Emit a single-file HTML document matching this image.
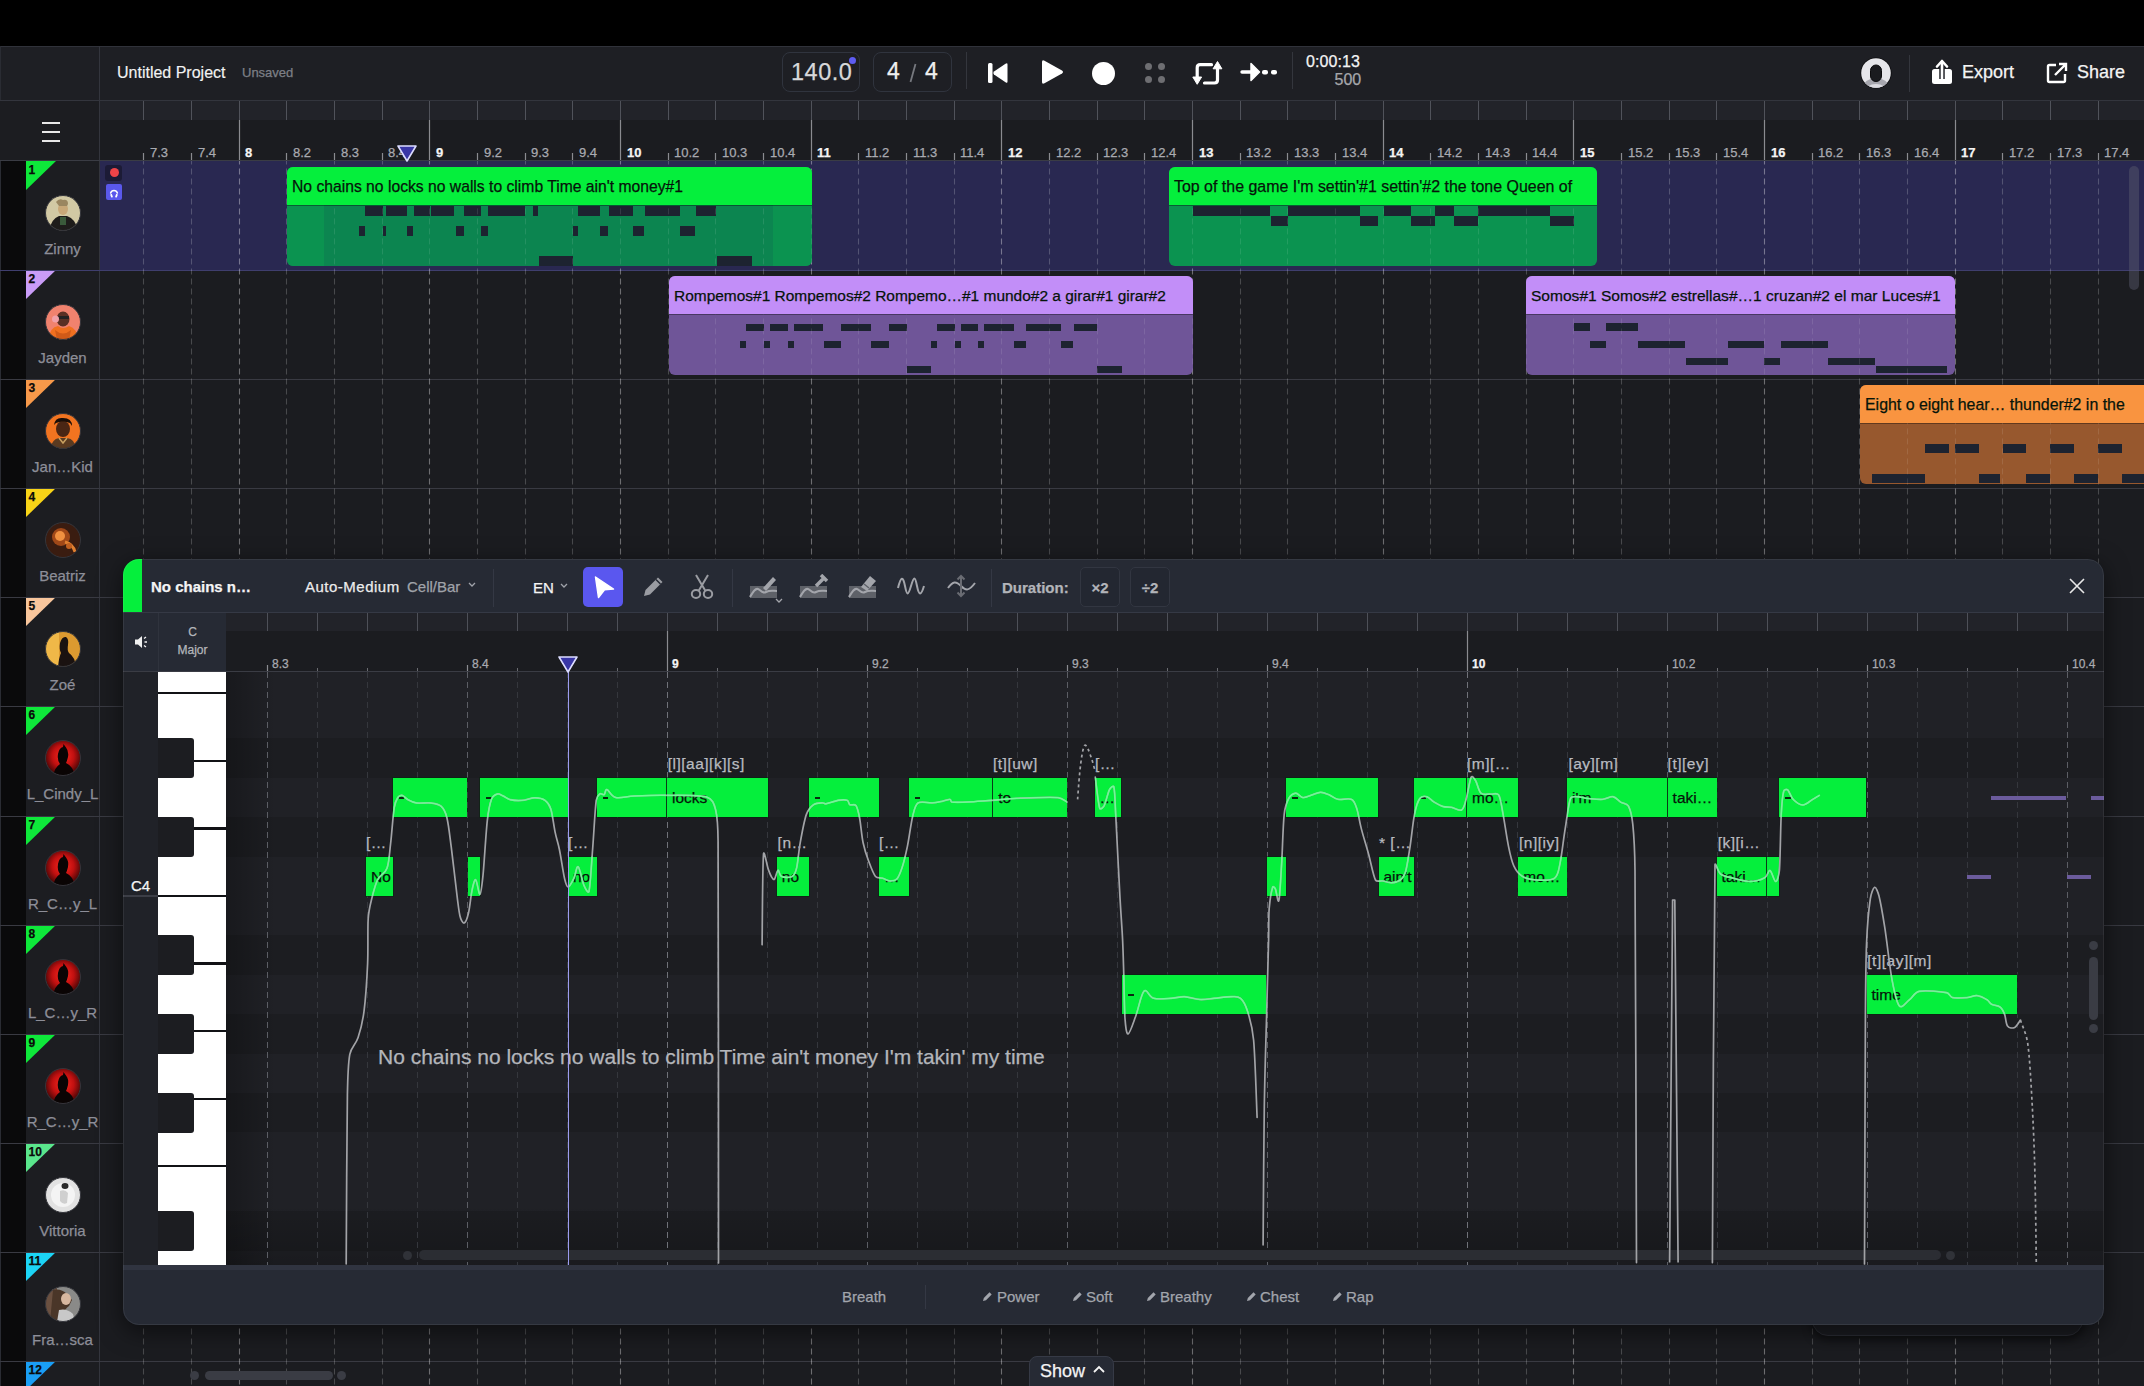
<!DOCTYPE html><html><head><meta charset="utf-8"><style>
*{box-sizing:border-box;margin:0;padding:0}
html,body{width:2144px;height:1386px;overflow:hidden;background:#000;font-family:"Liberation Sans", sans-serif}
.abs{position:absolute}
.t{position:absolute;white-space:nowrap;line-height:1;-webkit-text-stroke:0.25px currentColor}
</style></head><body>
<div class="abs" style="left:0;top:0;width:2144px;height:1386px;overflow:hidden">

<div class="abs" style="left:0;top:46px;width:2144px;height:54px;background:#1e1f24;border-top:1px solid #30323a"></div>
<div class="abs" style="left:99px;top:46px;width:1px;height:115px;background:#33353d"></div>
<div class="abs" style="left:0;top:46px;width:1px;height:1340px;background:#2a2c33"></div>
<div class="t" style="left:117px;top:65px;font-size:16px;color:#f2f2f2;-webkit-text-stroke:0.15px #f2f2f2">Untitled Project</div>
<div class="t" style="left:242px;top:66px;font-size:13px;color:#7d7f86">Unsaved</div>
<div class="abs" style="left:782px;top:52px;width:78px;height:40px;border-radius:8px;border:1px solid #30343e"></div>
<div class="t" style="left:791px;top:61px;font-size:23.5px;letter-spacing:0.5px;color:#d8d8da">140.0</div>
<div class="abs" style="left:849px;top:57px;width:7px;height:7px;border-radius:50%;background:#5e5cf2"></div>
<div class="abs" style="left:873px;top:52px;width:79px;height:40px;border-radius:8px;border:1px solid #30343e"></div>
<div class="t" style="left:887px;top:60px;font-size:23px;color:#f0f0f0">4</div>
<svg class="abs" style="left:908px;top:62px" width="10" height="22"><path d="M7.5 2 L2.5 20" stroke="#77797f" stroke-width="1.8"/></svg>
<div class="t" style="left:925px;top:60px;font-size:23px;color:#f0f0f0">4</div>
<div class="abs" style="left:966px;top:52px;width:1px;height:37px;background:#34363d"></div>
<svg class="abs" style="left:985px;top:60px" width="26" height="26"><rect x="3" y="3" width="4.5" height="20" rx="1.5" fill="#fff"/><path d="M22.5 4.5 L22.5 21.5 Q22.5 23.5 20.5 22.2 L9 14.5 Q7.5 13 9 11.5 L20.5 3.8 Q22.5 2.5 22.5 4.5Z" fill="#fff"/></svg>
<svg class="abs" style="left:1038px;top:57px" width="28" height="30"><path d="M4 5 Q4 2.5 6.5 3.8 L24 13.5 Q26 15 24 16.5 L6.5 26.2 Q4 27.5 4 25 Z" fill="#fff"/></svg>
<div class="abs" style="left:1092px;top:62px;width:23px;height:23px;border-radius:50%;background:#fff"></div>
<div class="abs" style="left:1144.8px;top:63.0px;width:7.4px;height:7.4px;border-radius:50%;background:#6e6e72"></div>
<div class="abs" style="left:1158.1px;top:63.0px;width:7.4px;height:7.4px;border-radius:50%;background:#6e6e72"></div>
<div class="abs" style="left:1144.8px;top:76.0px;width:7.4px;height:7.4px;border-radius:50%;background:#6e6e72"></div>
<div class="abs" style="left:1158.1px;top:76.0px;width:7.4px;height:7.4px;border-radius:50%;background:#6e6e72"></div>
<svg class="abs" style="left:1190px;top:59px" width="34" height="28"><path d="M7.2 19 V8.7 Q7.2 5.7 10.2 5.7 H21.5" fill="none" stroke="#fff" stroke-width="3.2" stroke-linecap="round"/><path d="M27.5 9.5 V21 Q27.5 24 24.5 24 H14.5" fill="none" stroke="#fff" stroke-width="3.2" stroke-linecap="round"/><path d="M2.8 18 L11.6 18 L7.2 25.3 Z" fill="#fff" stroke="#fff" stroke-width="1" stroke-linejoin="round"/><path d="M23.1 9.8 L31.9 9.8 L27.5 2.5 Z" fill="#fff" stroke="#fff" stroke-width="1" stroke-linejoin="round"/></svg>
<svg class="abs" style="left:1240px;top:60px" width="40" height="24"><path d="M2 12 H14" stroke="#fff" stroke-width="3.4" stroke-linecap="round"/><path d="M11 3.5 L19.5 12 L11 20.5 Z" fill="#fff" stroke="#fff" stroke-width="1.5" stroke-linejoin="round"/><rect x="22" y="10" width="6" height="4.5" rx="2" fill="#fff"/><rect x="31" y="10" width="6" height="4.5" rx="2" fill="#fff"/></svg>
<div class="abs" style="left:1292px;top:52px;width:1px;height:37px;background:#34363d"></div>
<div class="t" style="left:1306px;top:53.5px;font-size:16px;letter-spacing:0.1px;color:#f4f4f4">0:00:13</div>
<div class="t" style="left:1334.5px;top:72.2px;font-size:16px;color:#a6a7ab">500</div>
<svg class="abs" style="left:1860px;top:57px" width="32" height="32"><defs><clipPath id="uav"><circle cx="16" cy="16" r="14.8"/></clipPath></defs><circle cx="16" cy="16" r="15.6" fill="#0c0c0e"/><g clip-path="url(#uav)"><rect width="32" height="32" fill="#e6e6ea"/><ellipse cx="16" cy="30" rx="13" ry="9" fill="#a6a6ae"/><ellipse cx="16" cy="35" rx="11" ry="8" fill="#dcdce2"/><rect x="10.5" y="8" width="11" height="16.5" rx="5.5" fill="#1a1b1f" stroke="#0c0c0e" stroke-width="1"/></g></svg>
<div class="abs" style="left:1909px;top:55px;width:1px;height:37px;background:#34363d"></div>
<svg class="abs" style="left:1930px;top:58px" width="24" height="28"><rect x="2" y="11" width="20" height="15" rx="2.5" fill="#fff"/><path d="M12 21 V5" stroke="#1e1f24" stroke-width="5.5"/><path d="M12 21 V5" stroke="#fff" stroke-width="2.6" stroke-linecap="round"/><path d="M7 8.5 L12 3 L17 8.5" fill="none" stroke="#fff" stroke-width="2.6" stroke-linecap="round" stroke-linejoin="round"/></svg>
<div class="t" style="left:1962px;top:63px;font-size:18px;color:#f4f4f4">Export</div>
<svg class="abs" style="left:2045px;top:61px" width="24" height="24"><path d="M11 4 H4.5 Q3 4 3 5.5 V19.5 Q3 21 4.5 21 H18.5 Q20 21 20 19.5 V13" fill="none" stroke="#fff" stroke-width="2.4"/><path d="M10 14 L20.5 3.5 M14 3 H21 V10" fill="none" stroke="#fff" stroke-width="2.4"/></svg>
<div class="t" style="left:2077px;top:63px;font-size:18px;color:#f4f4f4">Share</div>
<div class="abs" style="left:0;top:100px;width:2144px;height:1px;background:#33353d"></div>
<div class="abs" style="left:0;top:101px;width:99px;height:60px;background:#1c1d21"></div>
<div class="abs" style="left:100px;top:101px;width:2044px;height:19px;background:#222329"></div>
<div class="abs" style="left:100px;top:120px;width:2044px;height:40px;background:#1b1c20"></div>
<div class="abs" style="left:0;top:160px;width:2144px;height:1px;background:#3a3c44"></div>
<div class="abs" style="left:42px;top:122px;width:18px;height:2px;background:#e8e8e8"></div>
<div class="abs" style="left:42px;top:131px;width:18px;height:2px;background:#e8e8e8"></div>
<div class="abs" style="left:42px;top:140px;width:18px;height:2px;background:#e8e8e8"></div>
<div class="abs" style="left:100px;top:161px;width:2044px;height:109px;background:#292851"></div>
<div class="abs" style="left:1px;top:161px;width:25px;height:109px;background:#0a0a0b"></div>
<div class="abs" style="left:26px;top:161px;width:73px;height:109px;background:#1c1d21"></div>
<div class="abs" style="left:99px;top:161px;width:1px;height:109px;background:#33353d"></div>
<svg class="abs" style="left:26px;top:161px" width="30" height="30"><polygon points="0,0 30,0 0,29" fill="#0ee83a"/></svg>
<div class="t" style="left:28.5px;top:164px;font-size:12px;font-weight:bold;color:#0a0a0a">1</div>
<svg class="abs" style="left:45px;top:195px" width="36" height="36" viewBox="0 0 36 36"><defs><clipPath id="av0"><circle cx="18" cy="18" r="17.5"/></clipPath></defs><g clip-path="url(#av0)"><rect width="36" height="36" fill="#d2c9a4"/><path d="M4 36 Q6 24 14 21 L22 21 Q31 24 33 36Z" fill="#1e1c1a"/><ellipse cx="18" cy="14" rx="5" ry="6" fill="#c8a878"/><path d="M11 7 Q14 3 18 5 Q23 4 23 9 L22 11 L14 11Z" fill="#9a8660"/><rect x="15" y="22" width="6" height="8" fill="#3a5a3a"/></g><circle cx="18" cy="18" r="17.5" fill="none" stroke="#34353b" stroke-width="1"/></svg>
<div class="t" style="left:26px;width:73px;text-align:center;top:241px;font-size:15px;color:#8d8e98">Zinny</div>
<div class="abs" style="left:100px;top:270px;width:2044px;height:109px;background:#1b1c20"></div>
<div class="abs" style="left:1px;top:270px;width:25px;height:109px;background:#0a0a0b"></div>
<div class="abs" style="left:26px;top:270px;width:73px;height:109px;background:#1c1d21"></div>
<div class="abs" style="left:99px;top:270px;width:1px;height:109px;background:#33353d"></div>
<svg class="abs" style="left:26px;top:270px" width="30" height="30"><polygon points="0,0 30,0 0,29" fill="#c99cf7"/></svg>
<div class="t" style="left:28.5px;top:273px;font-size:12px;font-weight:bold;color:#0a0a0a">2</div>
<svg class="abs" style="left:45px;top:304px" width="36" height="36" viewBox="0 0 36 36"><defs><clipPath id="av1"><circle cx="18" cy="18" r="17.5"/></clipPath></defs><g clip-path="url(#av1)"><rect width="36" height="36" fill="#f0826e"/><ellipse cx="18" cy="15" rx="6.5" ry="7.5" fill="#5a3024"/><rect x="12" y="12" width="12" height="3" fill="#222"/><circle cx="10.5" cy="15" r="3.5" fill="#f0a0a8"/><path d="M3 36 Q5 23 13 22 Q18 26 24 22 Q32 24 33 36Z" fill="#f07020"/><path d="M10 26 Q18 33 26 26 L24 36 L12 36Z" fill="#d05a18"/></g><circle cx="18" cy="18" r="17.5" fill="none" stroke="#34353b" stroke-width="1"/></svg>
<div class="t" style="left:26px;width:73px;text-align:center;top:350px;font-size:15px;color:#8d8e98">Jayden</div>
<div class="abs" style="left:100px;top:379px;width:2044px;height:109px;background:#1b1c20"></div>
<div class="abs" style="left:1px;top:379px;width:25px;height:109px;background:#0a0a0b"></div>
<div class="abs" style="left:26px;top:379px;width:73px;height:109px;background:#1c1d21"></div>
<div class="abs" style="left:99px;top:379px;width:1px;height:109px;background:#33353d"></div>
<svg class="abs" style="left:26px;top:379px" width="30" height="30"><polygon points="0,0 30,0 0,29" fill="#f7994a"/></svg>
<div class="t" style="left:28.5px;top:382px;font-size:12px;font-weight:bold;color:#0a0a0a">3</div>
<svg class="abs" style="left:45px;top:413px" width="36" height="36" viewBox="0 0 36 36"><defs><clipPath id="av2"><circle cx="18" cy="18" r="17.5"/></clipPath></defs><g clip-path="url(#av2)"><rect width="36" height="36" fill="#f27420"/><ellipse cx="18" cy="16" rx="7" ry="8" fill="#4a2614"/><path d="M9 12 Q10 4 18 5 Q27 5 27 13 L25 10 Q18 7 11 10Z" fill="#1a0e08"/><path d="M5 36 Q7 26 14 25 L22 25 Q30 26 31 36Z" fill="#5a3a20"/><path d="M14 25 L18 30 L22 25" fill="none" stroke="#c8a060" stroke-width="1.5"/></g><circle cx="18" cy="18" r="17.5" fill="none" stroke="#34353b" stroke-width="1"/></svg>
<div class="t" style="left:26px;width:73px;text-align:center;top:459px;font-size:15px;color:#8d8e98">Jan…Kid</div>
<div class="abs" style="left:100px;top:488px;width:2044px;height:109px;background:#1b1c20"></div>
<div class="abs" style="left:1px;top:488px;width:25px;height:109px;background:#0a0a0b"></div>
<div class="abs" style="left:26px;top:488px;width:73px;height:109px;background:#1c1d21"></div>
<div class="abs" style="left:99px;top:488px;width:1px;height:109px;background:#33353d"></div>
<svg class="abs" style="left:26px;top:488px" width="30" height="30"><polygon points="0,0 30,0 0,29" fill="#f8d417"/></svg>
<div class="t" style="left:28.5px;top:491px;font-size:12px;font-weight:bold;color:#0a0a0a">4</div>
<svg class="abs" style="left:45px;top:522px" width="36" height="36" viewBox="0 0 36 36"><defs><clipPath id="av3"><circle cx="18" cy="18" r="17.5"/></clipPath></defs><g clip-path="url(#av3)"><rect width="36" height="36" fill="#3a1c10"/><circle cx="16" cy="15" r="9" fill="#a04818"/><circle cx="15" cy="14" r="5" fill="#f09040"/><path d="M20 20 Q28 22 30 30" stroke="#e08030" stroke-width="3" fill="none"/><circle cx="24" cy="24" r="3" fill="#c06020"/></g><circle cx="18" cy="18" r="17.5" fill="none" stroke="#34353b" stroke-width="1"/></svg>
<div class="t" style="left:26px;width:73px;text-align:center;top:568px;font-size:15px;color:#8d8e98">Beatriz</div>
<div class="abs" style="left:100px;top:597px;width:2044px;height:109px;background:#1b1c20"></div>
<div class="abs" style="left:1px;top:597px;width:25px;height:109px;background:#0a0a0b"></div>
<div class="abs" style="left:26px;top:597px;width:73px;height:109px;background:#1c1d21"></div>
<div class="abs" style="left:99px;top:597px;width:1px;height:109px;background:#33353d"></div>
<svg class="abs" style="left:26px;top:597px" width="30" height="30"><polygon points="0,0 30,0 0,29" fill="#f8c69c"/></svg>
<div class="t" style="left:28.5px;top:600px;font-size:12px;font-weight:bold;color:#0a0a0a">5</div>
<svg class="abs" style="left:45px;top:631px" width="36" height="36" viewBox="0 0 36 36"><defs><clipPath id="av4"><circle cx="18" cy="18" r="17.5"/></clipPath></defs><g clip-path="url(#av4)"><rect width="36" height="36" fill="#dc9a30"/><rect x="0" y="0" width="14" height="36" fill="#f0b848"/><path d="M13 36 Q14 26 16 22 Q14 18 15 12 Q17 5 21 6 Q24 8 23 14 Q22 19 24 22 Q30 26 31 36Z" fill="#1a1210"/></g><circle cx="18" cy="18" r="17.5" fill="none" stroke="#34353b" stroke-width="1"/></svg>
<div class="t" style="left:26px;width:73px;text-align:center;top:677px;font-size:15px;color:#8d8e98">Zoé</div>
<div class="abs" style="left:100px;top:706px;width:2044px;height:110px;background:#1b1c20"></div>
<div class="abs" style="left:1px;top:706px;width:25px;height:110px;background:#0a0a0b"></div>
<div class="abs" style="left:26px;top:706px;width:73px;height:110px;background:#1c1d21"></div>
<div class="abs" style="left:99px;top:706px;width:1px;height:110px;background:#33353d"></div>
<svg class="abs" style="left:26px;top:706px" width="30" height="30"><polygon points="0,0 30,0 0,29" fill="#0ee83a"/></svg>
<div class="t" style="left:28.5px;top:709px;font-size:12px;font-weight:bold;color:#0a0a0a">6</div>
<svg class="abs" style="left:45px;top:740px" width="36" height="36" viewBox="0 0 36 36"><defs><clipPath id="av5"><circle cx="18" cy="18" r="17.5"/></clipPath></defs><g clip-path="url(#av5)"><defs><radialGradient id="rg5" cx="50%" cy="45%" r="55%"><stop offset="0" stop-color="#ff2a20"/><stop offset="0.55" stop-color="#c01010"/><stop offset="1" stop-color="#3a0606"/></radialGradient></defs><rect width="36" height="36" fill="url(#rg5)"/><path d="M8 36 Q10 27 15 24 Q12 20 13 14 Q14 8 18 7 L18.5 4 L21 7.5 Q24 11 23 17 Q22 21 21 23 Q28 26 30 36Z" fill="#0a0404"/></g><circle cx="18" cy="18" r="17.5" fill="none" stroke="#34353b" stroke-width="1"/></svg>
<div class="t" style="left:26px;width:73px;text-align:center;top:786px;font-size:15px;color:#8d8e98">L_Cindy_L</div>
<div class="abs" style="left:100px;top:816px;width:2044px;height:109px;background:#1b1c20"></div>
<div class="abs" style="left:1px;top:816px;width:25px;height:109px;background:#0a0a0b"></div>
<div class="abs" style="left:26px;top:816px;width:73px;height:109px;background:#1c1d21"></div>
<div class="abs" style="left:99px;top:816px;width:1px;height:109px;background:#33353d"></div>
<svg class="abs" style="left:26px;top:816px" width="30" height="30"><polygon points="0,0 30,0 0,29" fill="#0ee83a"/></svg>
<div class="t" style="left:28.5px;top:819px;font-size:12px;font-weight:bold;color:#0a0a0a">7</div>
<svg class="abs" style="left:45px;top:850px" width="36" height="36" viewBox="0 0 36 36"><defs><clipPath id="av6"><circle cx="18" cy="18" r="17.5"/></clipPath></defs><g clip-path="url(#av6)"><defs><radialGradient id="rg6" cx="50%" cy="45%" r="55%"><stop offset="0" stop-color="#ff2a20"/><stop offset="0.55" stop-color="#c01010"/><stop offset="1" stop-color="#3a0606"/></radialGradient></defs><rect width="36" height="36" fill="url(#rg6)"/><path d="M8 36 Q10 27 15 24 Q12 20 13 14 Q14 8 18 7 L18.5 4 L21 7.5 Q24 11 23 17 Q22 21 21 23 Q28 26 30 36Z" fill="#0a0404"/></g><circle cx="18" cy="18" r="17.5" fill="none" stroke="#34353b" stroke-width="1"/></svg>
<div class="t" style="left:26px;width:73px;text-align:center;top:896px;font-size:15px;color:#8d8e98">R_C…y_L</div>
<div class="abs" style="left:100px;top:925px;width:2044px;height:109px;background:#1b1c20"></div>
<div class="abs" style="left:1px;top:925px;width:25px;height:109px;background:#0a0a0b"></div>
<div class="abs" style="left:26px;top:925px;width:73px;height:109px;background:#1c1d21"></div>
<div class="abs" style="left:99px;top:925px;width:1px;height:109px;background:#33353d"></div>
<svg class="abs" style="left:26px;top:925px" width="30" height="30"><polygon points="0,0 30,0 0,29" fill="#0ee83a"/></svg>
<div class="t" style="left:28.5px;top:928px;font-size:12px;font-weight:bold;color:#0a0a0a">8</div>
<svg class="abs" style="left:45px;top:959px" width="36" height="36" viewBox="0 0 36 36"><defs><clipPath id="av7"><circle cx="18" cy="18" r="17.5"/></clipPath></defs><g clip-path="url(#av7)"><defs><radialGradient id="rg7" cx="50%" cy="45%" r="55%"><stop offset="0" stop-color="#ff2a20"/><stop offset="0.55" stop-color="#c01010"/><stop offset="1" stop-color="#3a0606"/></radialGradient></defs><rect width="36" height="36" fill="url(#rg7)"/><path d="M8 36 Q10 27 15 24 Q12 20 13 14 Q14 8 18 7 L18.5 4 L21 7.5 Q24 11 23 17 Q22 21 21 23 Q28 26 30 36Z" fill="#0a0404"/></g><circle cx="18" cy="18" r="17.5" fill="none" stroke="#34353b" stroke-width="1"/></svg>
<div class="t" style="left:26px;width:73px;text-align:center;top:1005px;font-size:15px;color:#8d8e98">L_C…y_R</div>
<div class="abs" style="left:100px;top:1034px;width:2044px;height:109px;background:#1b1c20"></div>
<div class="abs" style="left:1px;top:1034px;width:25px;height:109px;background:#0a0a0b"></div>
<div class="abs" style="left:26px;top:1034px;width:73px;height:109px;background:#1c1d21"></div>
<div class="abs" style="left:99px;top:1034px;width:1px;height:109px;background:#33353d"></div>
<svg class="abs" style="left:26px;top:1034px" width="30" height="30"><polygon points="0,0 30,0 0,29" fill="#0ee83a"/></svg>
<div class="t" style="left:28.5px;top:1037px;font-size:12px;font-weight:bold;color:#0a0a0a">9</div>
<svg class="abs" style="left:45px;top:1068px" width="36" height="36" viewBox="0 0 36 36"><defs><clipPath id="av8"><circle cx="18" cy="18" r="17.5"/></clipPath></defs><g clip-path="url(#av8)"><defs><radialGradient id="rg8" cx="50%" cy="45%" r="55%"><stop offset="0" stop-color="#ff2a20"/><stop offset="0.55" stop-color="#c01010"/><stop offset="1" stop-color="#3a0606"/></radialGradient></defs><rect width="36" height="36" fill="url(#rg8)"/><path d="M8 36 Q10 27 15 24 Q12 20 13 14 Q14 8 18 7 L18.5 4 L21 7.5 Q24 11 23 17 Q22 21 21 23 Q28 26 30 36Z" fill="#0a0404"/></g><circle cx="18" cy="18" r="17.5" fill="none" stroke="#34353b" stroke-width="1"/></svg>
<div class="t" style="left:26px;width:73px;text-align:center;top:1114px;font-size:15px;color:#8d8e98">R_C…y_R</div>
<div class="abs" style="left:100px;top:1143px;width:2044px;height:109px;background:#1b1c20"></div>
<div class="abs" style="left:1px;top:1143px;width:25px;height:109px;background:#0a0a0b"></div>
<div class="abs" style="left:26px;top:1143px;width:73px;height:109px;background:#1c1d21"></div>
<div class="abs" style="left:99px;top:1143px;width:1px;height:109px;background:#33353d"></div>
<svg class="abs" style="left:26px;top:1143px" width="30" height="30"><polygon points="0,0 30,0 0,29" fill="#5ae68c"/></svg>
<div class="t" style="left:28.5px;top:1146px;font-size:12px;font-weight:bold;color:#0a0a0a">10</div>
<svg class="abs" style="left:45px;top:1177px" width="36" height="36" viewBox="0 0 36 36"><defs><clipPath id="av9"><circle cx="18" cy="18" r="17.5"/></clipPath></defs><g clip-path="url(#av9)"><rect width="36" height="36" fill="#e2e2e2"/><circle cx="18" cy="18" r="12" fill="#f4f4f4"/><ellipse cx="20" cy="9" rx="3.5" ry="3" fill="#2a2a2a"/><path d="M15 14 Q20 12 23 16 L22 26 Q18 28 15 24Z" fill="#cfcfcf"/></g><circle cx="18" cy="18" r="17.5" fill="none" stroke="#34353b" stroke-width="1"/></svg>
<div class="t" style="left:26px;width:73px;text-align:center;top:1223px;font-size:15px;color:#8d8e98">Vittoria</div>
<div class="abs" style="left:100px;top:1252px;width:2044px;height:109px;background:#1b1c20"></div>
<div class="abs" style="left:1px;top:1252px;width:25px;height:109px;background:#0a0a0b"></div>
<div class="abs" style="left:26px;top:1252px;width:73px;height:109px;background:#1c1d21"></div>
<div class="abs" style="left:99px;top:1252px;width:1px;height:109px;background:#33353d"></div>
<svg class="abs" style="left:26px;top:1252px" width="30" height="30"><polygon points="0,0 30,0 0,29" fill="#1cd4f5"/></svg>
<div class="t" style="left:28.5px;top:1255px;font-size:12px;font-weight:bold;color:#0a0a0a">11</div>
<svg class="abs" style="left:45px;top:1286px" width="36" height="36" viewBox="0 0 36 36"><defs><clipPath id="av10"><circle cx="18" cy="18" r="17.5"/></clipPath></defs><g clip-path="url(#av10)"><rect width="36" height="36" fill="#8a8a88"/><rect x="0" y="0" width="12" height="36" fill="#6a5040"/><path d="M8 4 Q16 2 22 8 L27 14 L24 20 Q20 22 18 30 L12 36 L5 36Z" fill="#4a3628"/><ellipse cx="21" cy="13" rx="5" ry="6" fill="#d8b8a0"/><path d="M14 24 Q22 22 28 28 L30 36 L12 36Z" fill="#c8c8c8"/></g><circle cx="18" cy="18" r="17.5" fill="none" stroke="#34353b" stroke-width="1"/></svg>
<div class="t" style="left:26px;width:73px;text-align:center;top:1332px;font-size:15px;color:#8d8e98">Fra…sca</div>
<div class="abs" style="left:100px;top:1361px;width:2044px;height:109px;background:#1b1c20"></div>
<div class="abs" style="left:1px;top:1361px;width:25px;height:109px;background:#0a0a0b"></div>
<div class="abs" style="left:26px;top:1361px;width:73px;height:109px;background:#1c1d21"></div>
<div class="abs" style="left:99px;top:1361px;width:1px;height:109px;background:#33353d"></div>
<svg class="abs" style="left:26px;top:1361px" width="30" height="30"><polygon points="0,0 30,0 0,29" fill="#1a9ef5"/></svg>
<div class="t" style="left:28.5px;top:1364px;font-size:12px;font-weight:bold;color:#0a0a0a">12</div>
<div class="abs" style="left:0;top:270px;width:2144px;height:1.2px;background:#3f3e6e"></div>
<div class="abs" style="left:0;top:379px;width:2144px;height:1.2px;background:#393a42"></div>
<div class="abs" style="left:0;top:488px;width:2144px;height:1.2px;background:#393a42"></div>
<div class="abs" style="left:0;top:597px;width:2144px;height:1.2px;background:#393a42"></div>
<div class="abs" style="left:0;top:706px;width:2144px;height:1.2px;background:#393a42"></div>
<div class="abs" style="left:0;top:816px;width:2144px;height:1.2px;background:#393a42"></div>
<div class="abs" style="left:0;top:925px;width:2144px;height:1.2px;background:#393a42"></div>
<div class="abs" style="left:0;top:1034px;width:2144px;height:1.2px;background:#393a42"></div>
<div class="abs" style="left:0;top:1143px;width:2144px;height:1.2px;background:#393a42"></div>
<div class="abs" style="left:0;top:1252px;width:2144px;height:1.2px;background:#393a42"></div>
<div class="abs" style="left:0;top:1361px;width:2144px;height:1.2px;background:#393a42"></div>
<div class="abs" style="left:0;top:1470px;width:2144px;height:1.2px;background:#393a42"></div>
<svg class="abs" style="left:0;top:0" width="2144" height="1386">
<line x1="143.5" y1="161" x2="143.5" y2="1386" stroke="rgba(255,255,255,0.2)" stroke-width="1.1" stroke-dasharray="6 4" stroke-dashoffset="2.6"/>
<line x1="191.5" y1="161" x2="191.5" y2="1386" stroke="rgba(255,255,255,0.2)" stroke-width="1.1" stroke-dasharray="6 4" stroke-dashoffset="2.6"/>
<line x1="239.5" y1="161" x2="239.5" y2="1386" stroke="rgba(255,255,255,0.36)" stroke-width="1.1" stroke-dasharray="6 4" stroke-dashoffset="2.6"/>
<line x1="286.5" y1="161" x2="286.5" y2="1386" stroke="rgba(255,255,255,0.2)" stroke-width="1.1" stroke-dasharray="6 4" stroke-dashoffset="2.6"/>
<line x1="334.5" y1="161" x2="334.5" y2="1386" stroke="rgba(255,255,255,0.2)" stroke-width="1.1" stroke-dasharray="6 4" stroke-dashoffset="2.6"/>
<line x1="382.5" y1="161" x2="382.5" y2="1386" stroke="rgba(255,255,255,0.2)" stroke-width="1.1" stroke-dasharray="6 4" stroke-dashoffset="2.6"/>
<line x1="429.5" y1="161" x2="429.5" y2="1386" stroke="rgba(255,255,255,0.36)" stroke-width="1.1" stroke-dasharray="6 4" stroke-dashoffset="2.6"/>
<line x1="477.5" y1="161" x2="477.5" y2="1386" stroke="rgba(255,255,255,0.2)" stroke-width="1.1" stroke-dasharray="6 4" stroke-dashoffset="2.6"/>
<line x1="525.5" y1="161" x2="525.5" y2="1386" stroke="rgba(255,255,255,0.2)" stroke-width="1.1" stroke-dasharray="6 4" stroke-dashoffset="2.6"/>
<line x1="572.5" y1="161" x2="572.5" y2="1386" stroke="rgba(255,255,255,0.2)" stroke-width="1.1" stroke-dasharray="6 4" stroke-dashoffset="2.6"/>
<line x1="620.5" y1="161" x2="620.5" y2="1386" stroke="rgba(255,255,255,0.36)" stroke-width="1.1" stroke-dasharray="6 4" stroke-dashoffset="2.6"/>
<line x1="668.5" y1="161" x2="668.5" y2="1386" stroke="rgba(255,255,255,0.2)" stroke-width="1.1" stroke-dasharray="6 4" stroke-dashoffset="2.6"/>
<line x1="715.5" y1="161" x2="715.5" y2="1386" stroke="rgba(255,255,255,0.2)" stroke-width="1.1" stroke-dasharray="6 4" stroke-dashoffset="2.6"/>
<line x1="763.5" y1="161" x2="763.5" y2="1386" stroke="rgba(255,255,255,0.2)" stroke-width="1.1" stroke-dasharray="6 4" stroke-dashoffset="2.6"/>
<line x1="811.5" y1="161" x2="811.5" y2="1386" stroke="rgba(255,255,255,0.36)" stroke-width="1.1" stroke-dasharray="6 4" stroke-dashoffset="2.6"/>
<line x1="858.5" y1="161" x2="858.5" y2="1386" stroke="rgba(255,255,255,0.2)" stroke-width="1.1" stroke-dasharray="6 4" stroke-dashoffset="2.6"/>
<line x1="906.5" y1="161" x2="906.5" y2="1386" stroke="rgba(255,255,255,0.2)" stroke-width="1.1" stroke-dasharray="6 4" stroke-dashoffset="2.6"/>
<line x1="954.5" y1="161" x2="954.5" y2="1386" stroke="rgba(255,255,255,0.2)" stroke-width="1.1" stroke-dasharray="6 4" stroke-dashoffset="2.6"/>
<line x1="1001.5" y1="161" x2="1001.5" y2="1386" stroke="rgba(255,255,255,0.36)" stroke-width="1.1" stroke-dasharray="6 4" stroke-dashoffset="2.6"/>
<line x1="1049.5" y1="161" x2="1049.5" y2="1386" stroke="rgba(255,255,255,0.2)" stroke-width="1.1" stroke-dasharray="6 4" stroke-dashoffset="2.6"/>
<line x1="1097.5" y1="161" x2="1097.5" y2="1386" stroke="rgba(255,255,255,0.2)" stroke-width="1.1" stroke-dasharray="6 4" stroke-dashoffset="2.6"/>
<line x1="1144.5" y1="161" x2="1144.5" y2="1386" stroke="rgba(255,255,255,0.2)" stroke-width="1.1" stroke-dasharray="6 4" stroke-dashoffset="2.6"/>
<line x1="1192.5" y1="161" x2="1192.5" y2="1386" stroke="rgba(255,255,255,0.36)" stroke-width="1.1" stroke-dasharray="6 4" stroke-dashoffset="2.6"/>
<line x1="1240.5" y1="161" x2="1240.5" y2="1386" stroke="rgba(255,255,255,0.2)" stroke-width="1.1" stroke-dasharray="6 4" stroke-dashoffset="2.6"/>
<line x1="1287.5" y1="161" x2="1287.5" y2="1386" stroke="rgba(255,255,255,0.2)" stroke-width="1.1" stroke-dasharray="6 4" stroke-dashoffset="2.6"/>
<line x1="1335.5" y1="161" x2="1335.5" y2="1386" stroke="rgba(255,255,255,0.2)" stroke-width="1.1" stroke-dasharray="6 4" stroke-dashoffset="2.6"/>
<line x1="1383.5" y1="161" x2="1383.5" y2="1386" stroke="rgba(255,255,255,0.36)" stroke-width="1.1" stroke-dasharray="6 4" stroke-dashoffset="2.6"/>
<line x1="1430.5" y1="161" x2="1430.5" y2="1386" stroke="rgba(255,255,255,0.2)" stroke-width="1.1" stroke-dasharray="6 4" stroke-dashoffset="2.6"/>
<line x1="1478.5" y1="161" x2="1478.5" y2="1386" stroke="rgba(255,255,255,0.2)" stroke-width="1.1" stroke-dasharray="6 4" stroke-dashoffset="2.6"/>
<line x1="1526.5" y1="161" x2="1526.5" y2="1386" stroke="rgba(255,255,255,0.2)" stroke-width="1.1" stroke-dasharray="6 4" stroke-dashoffset="2.6"/>
<line x1="1573.5" y1="161" x2="1573.5" y2="1386" stroke="rgba(255,255,255,0.36)" stroke-width="1.1" stroke-dasharray="6 4" stroke-dashoffset="2.6"/>
<line x1="1621.5" y1="161" x2="1621.5" y2="1386" stroke="rgba(255,255,255,0.2)" stroke-width="1.1" stroke-dasharray="6 4" stroke-dashoffset="2.6"/>
<line x1="1669.5" y1="161" x2="1669.5" y2="1386" stroke="rgba(255,255,255,0.2)" stroke-width="1.1" stroke-dasharray="6 4" stroke-dashoffset="2.6"/>
<line x1="1716.5" y1="161" x2="1716.5" y2="1386" stroke="rgba(255,255,255,0.2)" stroke-width="1.1" stroke-dasharray="6 4" stroke-dashoffset="2.6"/>
<line x1="1764.5" y1="161" x2="1764.5" y2="1386" stroke="rgba(255,255,255,0.36)" stroke-width="1.1" stroke-dasharray="6 4" stroke-dashoffset="2.6"/>
<line x1="1812.5" y1="161" x2="1812.5" y2="1386" stroke="rgba(255,255,255,0.2)" stroke-width="1.1" stroke-dasharray="6 4" stroke-dashoffset="2.6"/>
<line x1="1859.5" y1="161" x2="1859.5" y2="1386" stroke="rgba(255,255,255,0.2)" stroke-width="1.1" stroke-dasharray="6 4" stroke-dashoffset="2.6"/>
<line x1="1907.5" y1="161" x2="1907.5" y2="1386" stroke="rgba(255,255,255,0.2)" stroke-width="1.1" stroke-dasharray="6 4" stroke-dashoffset="2.6"/>
<line x1="1955.5" y1="161" x2="1955.5" y2="1386" stroke="rgba(255,255,255,0.36)" stroke-width="1.1" stroke-dasharray="6 4" stroke-dashoffset="2.6"/>
<line x1="2002.5" y1="161" x2="2002.5" y2="1386" stroke="rgba(255,255,255,0.2)" stroke-width="1.1" stroke-dasharray="6 4" stroke-dashoffset="2.6"/>
<line x1="2050.5" y1="161" x2="2050.5" y2="1386" stroke="rgba(255,255,255,0.2)" stroke-width="1.1" stroke-dasharray="6 4" stroke-dashoffset="2.6"/>
<line x1="2098.5" y1="161" x2="2098.5" y2="1386" stroke="rgba(255,255,255,0.2)" stroke-width="1.1" stroke-dasharray="6 4" stroke-dashoffset="2.6"/>
</svg>
<svg class="abs" style="left:0;top:0" width="2144" height="1386">
<line x1="143.5" y1="101" x2="143.5" y2="120" stroke="#50525a" stroke-width="1"/>
<line x1="143.5" y1="153" x2="143.5" y2="160" stroke="#8a8b90" stroke-width="1.2"/>
<line x1="191.5" y1="101" x2="191.5" y2="120" stroke="#50525a" stroke-width="1"/>
<line x1="191.5" y1="153" x2="191.5" y2="160" stroke="#8a8b90" stroke-width="1.2"/>
<line x1="239.5" y1="101" x2="239.5" y2="120" stroke="#50525a" stroke-width="1"/>
<line x1="239.5" y1="120" x2="239.5" y2="160" stroke="#8a8b90" stroke-width="1.2"/>
<line x1="286.5" y1="101" x2="286.5" y2="120" stroke="#50525a" stroke-width="1"/>
<line x1="286.5" y1="153" x2="286.5" y2="160" stroke="#8a8b90" stroke-width="1.2"/>
<line x1="334.5" y1="101" x2="334.5" y2="120" stroke="#50525a" stroke-width="1"/>
<line x1="334.5" y1="153" x2="334.5" y2="160" stroke="#8a8b90" stroke-width="1.2"/>
<line x1="382.5" y1="101" x2="382.5" y2="120" stroke="#50525a" stroke-width="1"/>
<line x1="382.5" y1="153" x2="382.5" y2="160" stroke="#8a8b90" stroke-width="1.2"/>
<line x1="429.5" y1="101" x2="429.5" y2="120" stroke="#50525a" stroke-width="1"/>
<line x1="429.5" y1="120" x2="429.5" y2="160" stroke="#8a8b90" stroke-width="1.2"/>
<line x1="477.5" y1="101" x2="477.5" y2="120" stroke="#50525a" stroke-width="1"/>
<line x1="477.5" y1="153" x2="477.5" y2="160" stroke="#8a8b90" stroke-width="1.2"/>
<line x1="525.5" y1="101" x2="525.5" y2="120" stroke="#50525a" stroke-width="1"/>
<line x1="525.5" y1="153" x2="525.5" y2="160" stroke="#8a8b90" stroke-width="1.2"/>
<line x1="572.5" y1="101" x2="572.5" y2="120" stroke="#50525a" stroke-width="1"/>
<line x1="572.5" y1="153" x2="572.5" y2="160" stroke="#8a8b90" stroke-width="1.2"/>
<line x1="620.5" y1="101" x2="620.5" y2="120" stroke="#50525a" stroke-width="1"/>
<line x1="620.5" y1="120" x2="620.5" y2="160" stroke="#8a8b90" stroke-width="1.2"/>
<line x1="668.5" y1="101" x2="668.5" y2="120" stroke="#50525a" stroke-width="1"/>
<line x1="668.5" y1="153" x2="668.5" y2="160" stroke="#8a8b90" stroke-width="1.2"/>
<line x1="715.5" y1="101" x2="715.5" y2="120" stroke="#50525a" stroke-width="1"/>
<line x1="715.5" y1="153" x2="715.5" y2="160" stroke="#8a8b90" stroke-width="1.2"/>
<line x1="763.5" y1="101" x2="763.5" y2="120" stroke="#50525a" stroke-width="1"/>
<line x1="763.5" y1="153" x2="763.5" y2="160" stroke="#8a8b90" stroke-width="1.2"/>
<line x1="811.5" y1="101" x2="811.5" y2="120" stroke="#50525a" stroke-width="1"/>
<line x1="811.5" y1="120" x2="811.5" y2="160" stroke="#8a8b90" stroke-width="1.2"/>
<line x1="858.5" y1="101" x2="858.5" y2="120" stroke="#50525a" stroke-width="1"/>
<line x1="858.5" y1="153" x2="858.5" y2="160" stroke="#8a8b90" stroke-width="1.2"/>
<line x1="906.5" y1="101" x2="906.5" y2="120" stroke="#50525a" stroke-width="1"/>
<line x1="906.5" y1="153" x2="906.5" y2="160" stroke="#8a8b90" stroke-width="1.2"/>
<line x1="954.5" y1="101" x2="954.5" y2="120" stroke="#50525a" stroke-width="1"/>
<line x1="954.5" y1="153" x2="954.5" y2="160" stroke="#8a8b90" stroke-width="1.2"/>
<line x1="1001.5" y1="101" x2="1001.5" y2="120" stroke="#50525a" stroke-width="1"/>
<line x1="1001.5" y1="120" x2="1001.5" y2="160" stroke="#8a8b90" stroke-width="1.2"/>
<line x1="1049.5" y1="101" x2="1049.5" y2="120" stroke="#50525a" stroke-width="1"/>
<line x1="1049.5" y1="153" x2="1049.5" y2="160" stroke="#8a8b90" stroke-width="1.2"/>
<line x1="1097.5" y1="101" x2="1097.5" y2="120" stroke="#50525a" stroke-width="1"/>
<line x1="1097.5" y1="153" x2="1097.5" y2="160" stroke="#8a8b90" stroke-width="1.2"/>
<line x1="1144.5" y1="101" x2="1144.5" y2="120" stroke="#50525a" stroke-width="1"/>
<line x1="1144.5" y1="153" x2="1144.5" y2="160" stroke="#8a8b90" stroke-width="1.2"/>
<line x1="1192.5" y1="101" x2="1192.5" y2="120" stroke="#50525a" stroke-width="1"/>
<line x1="1192.5" y1="120" x2="1192.5" y2="160" stroke="#8a8b90" stroke-width="1.2"/>
<line x1="1240.5" y1="101" x2="1240.5" y2="120" stroke="#50525a" stroke-width="1"/>
<line x1="1240.5" y1="153" x2="1240.5" y2="160" stroke="#8a8b90" stroke-width="1.2"/>
<line x1="1287.5" y1="101" x2="1287.5" y2="120" stroke="#50525a" stroke-width="1"/>
<line x1="1287.5" y1="153" x2="1287.5" y2="160" stroke="#8a8b90" stroke-width="1.2"/>
<line x1="1335.5" y1="101" x2="1335.5" y2="120" stroke="#50525a" stroke-width="1"/>
<line x1="1335.5" y1="153" x2="1335.5" y2="160" stroke="#8a8b90" stroke-width="1.2"/>
<line x1="1383.5" y1="101" x2="1383.5" y2="120" stroke="#50525a" stroke-width="1"/>
<line x1="1383.5" y1="120" x2="1383.5" y2="160" stroke="#8a8b90" stroke-width="1.2"/>
<line x1="1430.5" y1="101" x2="1430.5" y2="120" stroke="#50525a" stroke-width="1"/>
<line x1="1430.5" y1="153" x2="1430.5" y2="160" stroke="#8a8b90" stroke-width="1.2"/>
<line x1="1478.5" y1="101" x2="1478.5" y2="120" stroke="#50525a" stroke-width="1"/>
<line x1="1478.5" y1="153" x2="1478.5" y2="160" stroke="#8a8b90" stroke-width="1.2"/>
<line x1="1526.5" y1="101" x2="1526.5" y2="120" stroke="#50525a" stroke-width="1"/>
<line x1="1526.5" y1="153" x2="1526.5" y2="160" stroke="#8a8b90" stroke-width="1.2"/>
<line x1="1573.5" y1="101" x2="1573.5" y2="120" stroke="#50525a" stroke-width="1"/>
<line x1="1573.5" y1="120" x2="1573.5" y2="160" stroke="#8a8b90" stroke-width="1.2"/>
<line x1="1621.5" y1="101" x2="1621.5" y2="120" stroke="#50525a" stroke-width="1"/>
<line x1="1621.5" y1="153" x2="1621.5" y2="160" stroke="#8a8b90" stroke-width="1.2"/>
<line x1="1669.5" y1="101" x2="1669.5" y2="120" stroke="#50525a" stroke-width="1"/>
<line x1="1669.5" y1="153" x2="1669.5" y2="160" stroke="#8a8b90" stroke-width="1.2"/>
<line x1="1716.5" y1="101" x2="1716.5" y2="120" stroke="#50525a" stroke-width="1"/>
<line x1="1716.5" y1="153" x2="1716.5" y2="160" stroke="#8a8b90" stroke-width="1.2"/>
<line x1="1764.5" y1="101" x2="1764.5" y2="120" stroke="#50525a" stroke-width="1"/>
<line x1="1764.5" y1="120" x2="1764.5" y2="160" stroke="#8a8b90" stroke-width="1.2"/>
<line x1="1812.5" y1="101" x2="1812.5" y2="120" stroke="#50525a" stroke-width="1"/>
<line x1="1812.5" y1="153" x2="1812.5" y2="160" stroke="#8a8b90" stroke-width="1.2"/>
<line x1="1859.5" y1="101" x2="1859.5" y2="120" stroke="#50525a" stroke-width="1"/>
<line x1="1859.5" y1="153" x2="1859.5" y2="160" stroke="#8a8b90" stroke-width="1.2"/>
<line x1="1907.5" y1="101" x2="1907.5" y2="120" stroke="#50525a" stroke-width="1"/>
<line x1="1907.5" y1="153" x2="1907.5" y2="160" stroke="#8a8b90" stroke-width="1.2"/>
<line x1="1955.5" y1="101" x2="1955.5" y2="120" stroke="#50525a" stroke-width="1"/>
<line x1="1955.5" y1="120" x2="1955.5" y2="160" stroke="#8a8b90" stroke-width="1.2"/>
<line x1="2002.5" y1="101" x2="2002.5" y2="120" stroke="#50525a" stroke-width="1"/>
<line x1="2002.5" y1="153" x2="2002.5" y2="160" stroke="#8a8b90" stroke-width="1.2"/>
<line x1="2050.5" y1="101" x2="2050.5" y2="120" stroke="#50525a" stroke-width="1"/>
<line x1="2050.5" y1="153" x2="2050.5" y2="160" stroke="#8a8b90" stroke-width="1.2"/>
<line x1="2098.5" y1="101" x2="2098.5" y2="120" stroke="#50525a" stroke-width="1"/>
<line x1="2098.5" y1="153" x2="2098.5" y2="160" stroke="#8a8b90" stroke-width="1.2"/>
</svg>
<div class="t" style="left:150px;top:146px;font-size:13px;color:#a9aab0">7.3</div>
<div class="t" style="left:198px;top:146px;font-size:13px;color:#a9aab0">7.4</div>
<div class="t" style="left:245px;top:146px;font-size:13px;font-weight:bold;color:#f4f4f4">8</div>
<div class="t" style="left:293px;top:146px;font-size:13px;color:#a9aab0">8.2</div>
<div class="t" style="left:341px;top:146px;font-size:13px;color:#a9aab0">8.3</div>
<div class="t" style="left:388px;top:146px;font-size:13px;color:#a9aab0">8.4</div>
<div class="t" style="left:436px;top:146px;font-size:13px;font-weight:bold;color:#f4f4f4">9</div>
<div class="t" style="left:484px;top:146px;font-size:13px;color:#a9aab0">9.2</div>
<div class="t" style="left:531px;top:146px;font-size:13px;color:#a9aab0">9.3</div>
<div class="t" style="left:579px;top:146px;font-size:13px;color:#a9aab0">9.4</div>
<div class="t" style="left:627px;top:146px;font-size:13px;font-weight:bold;color:#f4f4f4">10</div>
<div class="t" style="left:674px;top:146px;font-size:13px;color:#a9aab0">10.2</div>
<div class="t" style="left:722px;top:146px;font-size:13px;color:#a9aab0">10.3</div>
<div class="t" style="left:770px;top:146px;font-size:13px;color:#a9aab0">10.4</div>
<div class="t" style="left:817px;top:146px;font-size:13px;font-weight:bold;color:#f4f4f4">11</div>
<div class="t" style="left:865px;top:146px;font-size:13px;color:#a9aab0">11.2</div>
<div class="t" style="left:913px;top:146px;font-size:13px;color:#a9aab0">11.3</div>
<div class="t" style="left:960px;top:146px;font-size:13px;color:#a9aab0">11.4</div>
<div class="t" style="left:1008px;top:146px;font-size:13px;font-weight:bold;color:#f4f4f4">12</div>
<div class="t" style="left:1056px;top:146px;font-size:13px;color:#a9aab0">12.2</div>
<div class="t" style="left:1103px;top:146px;font-size:13px;color:#a9aab0">12.3</div>
<div class="t" style="left:1151px;top:146px;font-size:13px;color:#a9aab0">12.4</div>
<div class="t" style="left:1199px;top:146px;font-size:13px;font-weight:bold;color:#f4f4f4">13</div>
<div class="t" style="left:1246px;top:146px;font-size:13px;color:#a9aab0">13.2</div>
<div class="t" style="left:1294px;top:146px;font-size:13px;color:#a9aab0">13.3</div>
<div class="t" style="left:1342px;top:146px;font-size:13px;color:#a9aab0">13.4</div>
<div class="t" style="left:1389px;top:146px;font-size:13px;font-weight:bold;color:#f4f4f4">14</div>
<div class="t" style="left:1437px;top:146px;font-size:13px;color:#a9aab0">14.2</div>
<div class="t" style="left:1485px;top:146px;font-size:13px;color:#a9aab0">14.3</div>
<div class="t" style="left:1532px;top:146px;font-size:13px;color:#a9aab0">14.4</div>
<div class="t" style="left:1580px;top:146px;font-size:13px;font-weight:bold;color:#f4f4f4">15</div>
<div class="t" style="left:1628px;top:146px;font-size:13px;color:#a9aab0">15.2</div>
<div class="t" style="left:1675px;top:146px;font-size:13px;color:#a9aab0">15.3</div>
<div class="t" style="left:1723px;top:146px;font-size:13px;color:#a9aab0">15.4</div>
<div class="t" style="left:1771px;top:146px;font-size:13px;font-weight:bold;color:#f4f4f4">16</div>
<div class="t" style="left:1818px;top:146px;font-size:13px;color:#a9aab0">16.2</div>
<div class="t" style="left:1866px;top:146px;font-size:13px;color:#a9aab0">16.3</div>
<div class="t" style="left:1914px;top:146px;font-size:13px;color:#a9aab0">16.4</div>
<div class="t" style="left:1961px;top:146px;font-size:13px;font-weight:bold;color:#f4f4f4">17</div>
<div class="t" style="left:2009px;top:146px;font-size:13px;color:#a9aab0">17.2</div>
<div class="t" style="left:2057px;top:146px;font-size:13px;color:#a9aab0">17.3</div>
<div class="t" style="left:2104px;top:146px;font-size:13px;color:#a9aab0">17.4</div>
<svg class="abs" style="left:396px;top:144px" width="22" height="19"><path d="M2 2 H20 L11 17 Z" fill="#3936a6" stroke="#dcdcff" stroke-width="1.6" stroke-linejoin="round"/></svg>
<div class="abs" style="left:104.5px;top:164.5px;width:17.5px;height:16px;border-radius:3px;background:#1c1b36"></div>
<div class="abs" style="left:109.6px;top:167.8px;width:9px;height:9px;border-radius:50%;background:#ee4448"></div>
<div class="abs" style="left:106px;top:184px;width:16px;height:16px;border-radius:2px;background:#5a58ec"></div>
<svg class="abs" style="left:106px;top:184px" width="16" height="16"><path d="M4.6 9 A3.6 3.6 0 0 1 11.4 9" fill="none" stroke="#fff" stroke-width="1.5" stroke-linecap="round"/><path d="M5.2 10.8 L5.9 12.6 M10.8 10.8 L10.1 12.6" stroke="#fff" stroke-width="1.8" stroke-linecap="round"/></svg>
<div class="abs" style="left:287px;top:167px;width:525px;height:99px;border-radius:6px;background:#0c8550;overflow:hidden">
<div class="abs" style="left:0;top:0;width:37px;height:99px;background:#0b9350"></div>
<div class="abs" style="left:486px;top:0;width:39px;height:99px;background:#0b9350"></div>
<div class="abs" style="left:0;top:0;width:525px;height:38px;background:#05ef3c"></div>
<div class="abs" style="left:0;top:38px;width:525px;height:1px;background:rgba(0,0,0,0.35)"></div>
<div class="t" style="left:5px;top:11.5px;font-size:15.7px;color:#06140a">No chains no locks no walls to climb Time ain't money#1</div>
<div class="abs" style="left:78px;top:39px;width:17.5px;height:10px;background:#1d2330"></div>
<div class="abs" style="left:99px;top:39px;width:20.5px;height:10px;background:#1d2330"></div>
<div class="abs" style="left:127px;top:39px;width:16px;height:10px;background:#1d2330"></div>
<div class="abs" style="left:143.5px;top:39px;width:23.19999999999999px;height:10px;background:#1d2330"></div>
<div class="abs" style="left:177px;top:39px;width:16.600000000000023px;height:10px;background:#1d2330"></div>
<div class="abs" style="left:201px;top:39px;width:37.39999999999998px;height:10px;background:#1d2330"></div>
<div class="abs" style="left:245.5px;top:39px;width:5.5px;height:10px;background:#1d2330"></div>
<div class="abs" style="left:291px;top:39px;width:21.700000000000045px;height:10px;background:#1d2330"></div>
<div class="abs" style="left:321.6px;top:39px;width:24.199999999999932px;height:10px;background:#1d2330"></div>
<div class="abs" style="left:358px;top:39px;width:35.299999999999955px;height:10px;background:#1d2330"></div>
<div class="abs" style="left:409px;top:39px;width:20px;height:10px;background:#1d2330"></div>
<div class="abs" style="left:71.60000000000002px;top:59px;width:6.0px;height:9.5px;background:#1d2330"></div>
<div class="abs" style="left:95.5px;top:59px;width:3.5px;height:9.5px;background:#1d2330"></div>
<div class="abs" style="left:119.69999999999999px;top:59px;width:6.699999999999989px;height:9.5px;background:#1d2330"></div>
<div class="abs" style="left:169.39999999999998px;top:59px;width:7.400000000000034px;height:9.5px;background:#1d2330"></div>
<div class="abs" style="left:193.60000000000002px;top:59px;width:7.099999999999966px;height:9.5px;background:#1d2330"></div>
<div class="abs" style="left:286.29999999999995px;top:59px;width:4.400000000000091px;height:9.5px;background:#1d2330"></div>
<div class="abs" style="left:312.70000000000005px;top:59px;width:8.5px;height:9.5px;background:#1d2330"></div>
<div class="abs" style="left:346.29999999999995px;top:59px;width:11.200000000000045px;height:9.5px;background:#1d2330"></div>
<div class="abs" style="left:393.29999999999995px;top:59px;width:15.0px;height:9.5px;background:#1d2330"></div>
<div class="abs" style="left:251.79999999999995px;top:89px;width:34.0px;height:9.5px;background:#1d2330"></div>
<div class="abs" style="left:429.79999999999995px;top:89px;width:35.200000000000045px;height:9.5px;background:#1d2330"></div>
</div>
<div class="abs" style="left:1169px;top:167px;width:428px;height:99px;border-radius:6px;background:#0b9350;overflow:hidden">
<div class="abs" style="left:0;top:0;width:428px;height:38px;background:#05ef3c"></div>
<div class="abs" style="left:0;top:38px;width:428px;height:1px;background:rgba(0,0,0,0.35)"></div>
<div class="t" style="left:5px;top:11.5px;font-size:15.95px;color:#06140a">Top of the game I'm settin'#1 settin'#2 the tone Queen of</div>
<div class="abs" style="left:23.700000000000045px;top:38.5px;width:77.79999999999995px;height:10px;background:#1d2330"></div>
<div class="abs" style="left:119px;top:38.5px;width:71.5px;height:10px;background:#1d2330"></div>
<div class="abs" style="left:215px;top:38.5px;width:26.5px;height:10px;background:#1d2330"></div>
<div class="abs" style="left:266px;top:38.5px;width:18.700000000000045px;height:10px;background:#1d2330"></div>
<div class="abs" style="left:309px;top:38.5px;width:71.59999999999991px;height:10px;background:#1d2330"></div>
<div class="abs" style="left:101.5px;top:48.5px;width:17.5px;height:10px;background:#1d2330"></div>
<div class="abs" style="left:190.5px;top:48.5px;width:18.5px;height:10px;background:#1d2330"></div>
<div class="abs" style="left:241.5px;top:48.5px;width:24.5px;height:10px;background:#1d2330"></div>
<div class="abs" style="left:284.70000000000005px;top:48.5px;width:24.299999999999955px;height:10px;background:#1d2330"></div>
<div class="abs" style="left:380.5999999999999px;top:48.5px;width:24.600000000000136px;height:10px;background:#1d2330"></div>
</div>
<div class="abs" style="left:669px;top:276px;width:524px;height:99px;border-radius:6px;background:#6f5598;overflow:hidden">
<div class="abs" style="left:0;top:0;width:524px;height:38px;background:#c28ef8"></div>
<div class="abs" style="left:0;top:38px;width:524px;height:1px;background:rgba(0,0,0,0.35)"></div>
<div class="t" style="left:5px;top:11.5px;font-size:15.47px;color:#06140a">Rompemos#1 Rompemos#2 Rompemo…#1 mundo#2 a girar#1 girar#2</div>
<div class="abs" style="left:77px;top:48.30000000000001px;width:18px;height:6.5px;background:#1d2330"></div>
<div class="abs" style="left:100.79999999999995px;top:48.30000000000001px;width:17.90000000000009px;height:6.5px;background:#1d2330"></div>
<div class="abs" style="left:124.60000000000002px;top:48.30000000000001px;width:29.899999999999977px;height:6.5px;background:#1d2330"></div>
<div class="abs" style="left:172px;top:48.30000000000001px;width:30px;height:6.5px;background:#1d2330"></div>
<div class="abs" style="left:219.70000000000005px;top:48.30000000000001px;width:17.899999999999977px;height:6.5px;background:#1d2330"></div>
<div class="abs" style="left:268px;top:48.30000000000001px;width:17.5px;height:6.5px;background:#1d2330"></div>
<div class="abs" style="left:291.70000000000005px;top:48.30000000000001px;width:17.59999999999991px;height:6.5px;background:#1d2330"></div>
<div class="abs" style="left:315.4px;top:48.30000000000001px;width:29.399999999999977px;height:6.5px;background:#1d2330"></div>
<div class="abs" style="left:356.9000000000001px;top:48.30000000000001px;width:35.5px;height:6.5px;background:#1d2330"></div>
<div class="abs" style="left:404.5px;top:48.30000000000001px;width:23.5px;height:6.5px;background:#1d2330"></div>
<div class="abs" style="left:71px;top:65.39999999999998px;width:6px;height:6.2px;background:#1d2330"></div>
<div class="abs" style="left:95px;top:65.39999999999998px;width:5.7999999999999545px;height:6.2px;background:#1d2330"></div>
<div class="abs" style="left:118.70000000000005px;top:65.39999999999998px;width:5.899999999999977px;height:6.2px;background:#1d2330"></div>
<div class="abs" style="left:154.5px;top:65.39999999999998px;width:17.5px;height:6.2px;background:#1d2330"></div>
<div class="abs" style="left:202px;top:65.39999999999998px;width:17.700000000000045px;height:6.2px;background:#1d2330"></div>
<div class="abs" style="left:261.70000000000005px;top:65.39999999999998px;width:6.2999999999999545px;height:6.2px;background:#1d2330"></div>
<div class="abs" style="left:285.5px;top:65.39999999999998px;width:6.2000000000000455px;height:6.2px;background:#1d2330"></div>
<div class="abs" style="left:309.29999999999995px;top:65.39999999999998px;width:6.100000000000023px;height:6.2px;background:#1d2330"></div>
<div class="abs" style="left:344.79999999999995px;top:65.39999999999998px;width:12.100000000000136px;height:6.2px;background:#1d2330"></div>
<div class="abs" style="left:392.4000000000001px;top:65.39999999999998px;width:12.099999999999909px;height:6.2px;background:#1d2330"></div>
<div class="abs" style="left:238px;top:90.30000000000001px;width:23.700000000000045px;height:7px;background:#1d2330"></div>
<div class="abs" style="left:428.20000000000005px;top:90.30000000000001px;width:24.799999999999955px;height:7px;background:#1d2330"></div>
</div>
<div class="abs" style="left:1526px;top:276px;width:429px;height:99px;border-radius:6px;background:#6f5598;overflow:hidden">
<div class="abs" style="left:0;top:0;width:429px;height:38px;background:#c28ef8"></div>
<div class="abs" style="left:0;top:38px;width:429px;height:1px;background:rgba(0,0,0,0.35)"></div>
<div class="t" style="left:5px;top:11.5px;font-size:15.55px;color:#06140a">Somos#1 Somos#2 estrellas#…1 cruzan#2 el mar Luces#1</div>
<div class="abs" style="left:48px;top:47.19999999999999px;width:15.5px;height:7.4px;background:#1d2330"></div>
<div class="abs" style="left:79.70000000000005px;top:47.19999999999999px;width:32.0px;height:7.4px;background:#1d2330"></div>
<div class="abs" style="left:63.5px;top:64.80000000000001px;width:16.200000000000045px;height:7px;background:#1d2330"></div>
<div class="abs" style="left:111.70000000000005px;top:64.80000000000001px;width:47.799999999999955px;height:7px;background:#1d2330"></div>
<div class="abs" style="left:202px;top:64.80000000000001px;width:36.299999999999955px;height:7px;background:#1d2330"></div>
<div class="abs" style="left:254.5px;top:64.80000000000001px;width:47.299999999999955px;height:7px;background:#1d2330"></div>
<div class="abs" style="left:159.5px;top:82px;width:42.5px;height:7px;background:#1d2330"></div>
<div class="abs" style="left:238.29999999999995px;top:82px;width:16.200000000000045px;height:7px;background:#1d2330"></div>
<div class="abs" style="left:301.79999999999995px;top:82px;width:47.700000000000045px;height:7px;background:#1d2330"></div>
<div class="abs" style="left:349.5px;top:90.30000000000001px;width:71.0px;height:7px;background:#1d2330"></div>
</div>
<div class="abs" style="left:1860px;top:385px;width:284px;height:99px;border-radius:6px 0 0 6px;background:#97582e;overflow:hidden">
<div class="abs" style="left:0;top:0;width:284px;height:38px;background:#f99440"></div>
<div class="abs" style="left:0;top:38px;width:284px;height:1px;background:rgba(0,0,0,0.35)"></div>
<div class="t" style="left:5px;top:11.5px;font-size:15.9px;color:#06140a">Eight o eight hear… thunder#2 in the</div>
<div class="abs" style="left:65px;top:59.19999999999999px;width:23.799999999999955px;height:9.3px;background:#1d2330"></div>
<div class="abs" style="left:95.29999999999995px;top:59.19999999999999px;width:23.700000000000045px;height:9.3px;background:#1d2330"></div>
<div class="abs" style="left:143px;top:59.19999999999999px;width:23px;height:9.3px;background:#1d2330"></div>
<div class="abs" style="left:190px;top:59.19999999999999px;width:24px;height:9.3px;background:#1d2330"></div>
<div class="abs" style="left:238px;top:59.19999999999999px;width:24px;height:9.3px;background:#1d2330"></div>
<div class="abs" style="left:11.799999999999955px;top:89px;width:53.200000000000045px;height:9px;background:#1d2330"></div>
<div class="abs" style="left:119px;top:89px;width:21px;height:9px;background:#1d2330"></div>
<div class="abs" style="left:166px;top:89px;width:24px;height:9px;background:#1d2330"></div>
<div class="abs" style="left:214px;top:89px;width:24px;height:9px;background:#1d2330"></div>
<div class="abs" style="left:262px;top:89px;width:22px;height:9px;background:#1d2330"></div>
</div>
<div class="abs" style="left:1812px;top:1200px;width:271px;height:136px;border-radius:0 0 16px 16px;background:#1b1c21;border:1px solid #2a2c33;box-shadow:0 4px 10px rgba(0,0,0,0.5)"></div>
<div class="abs" style="left:123px;top:559px;width:1981px;height:766px;border-radius:16px;background:#262a34;box-shadow:0 6px 24px rgba(0,0,0,0.55);overflow:hidden">
<div class="abs" style="left:0;top:0;width:18.5px;height:54px;background:#05ef3c"></div>
<div class="abs" style="left:0;top:53px;width:1981px;height:1px;background:#353945"></div>
<div class="t" style="left:28px;top:19.5px;font-size:15px;font-weight:bold;color:#f4f4f4">No chains n…</div>
<div class="t" style="left:182px;top:20px;font-size:15px;letter-spacing:0.5px;color:#ececec">Auto-Medium</div>
<div class="t" style="left:284px;top:20px;font-size:15px;color:#a0a3aa">Cell/Bar</div>
<svg class="abs" style="left:345px;top:23px" width="8" height="6"><path d="M1 1 L4 4 L7 1" fill="none" stroke="#a0a3aa" stroke-width="1.3"/></svg>
<div class="abs" style="left:370px;top:10px;width:1px;height:38px;background:#343844"></div>
<div class="t" style="left:410px;top:21px;font-size:15px;color:#f4f4f4">EN</div>
<svg class="abs" style="left:437px;top:24px" width="8" height="6"><path d="M1 1 L4 4 L7 1" fill="none" stroke="#a0a3aa" stroke-width="1.3"/></svg>
<div class="abs" style="left:460px;top:8px;width:40px;height:40px;border-radius:5px;background:#5a57ef"></div>
<svg class="abs" style="left:460px;top:8px" width="40" height="40"><path d="M12.5 10 L30.5 22 L21.5 22.8 L15.5 30.5 Z" fill="#fff" stroke="#fff" stroke-width="1.5" stroke-linejoin="round"/></svg>
<svg class="abs" style="left:518px;top:14px" width="24" height="26"><path d="M3 23 L4.5 17 L17 4.5 L21.5 9 L9 21.5 Z" fill="#9a9ca2"/><path d="M15 6.5 L19.5 11" stroke="#262a34" stroke-width="1.5"/></svg>
<svg class="abs" style="left:567px;top:15px" width="24" height="25"><path d="M6 1 L15.5 17 M18 1 L8.5 17" stroke="#9a9ca2" stroke-width="2" fill="none"/><ellipse cx="6" cy="20" rx="4.2" ry="4" fill="none" stroke="#9a9ca2" stroke-width="2"/><ellipse cx="18" cy="20" rx="4.2" ry="4" fill="none" stroke="#9a9ca2" stroke-width="2"/></svg>
<div class="abs" style="left:609px;top:10px;width:1px;height:38px;background:#343844"></div>
<svg class="abs" style="left:626px;top:15px" width="30" height="28"><rect x="1" y="12" width="27" height="12" fill="#5e6168"/><path d="M1 23 C4 18 6 14 9 15 S13 20 17 18 S24 17 28 17" fill="none" stroke="#a3a5ab" stroke-width="2"/><path d="M14 14 L24 3 L27 6 L17 17 Z" fill="#a3a5ab"/></svg>
<svg class="abs" style="left:652px;top:39px" width="8" height="6"><path d="M1 1 L4 4 L7 1" fill="none" stroke="#a3a5ab" stroke-width="1.3"/></svg>
<svg class="abs" style="left:676px;top:15px" width="30" height="28"><rect x="1" y="12" width="27" height="12" fill="#5e6168"/><path d="M1 23 C4 18 6 14 9 15 S13 20 17 18 S24 17 28 17" fill="none" stroke="#a3a5ab" stroke-width="2"/><path d="M17 12 L25 4 M22 1 L28 7" stroke="#a3a5ab" stroke-width="3.5"/></svg>
<svg class="abs" style="left:725px;top:15px" width="30" height="28"><rect x="1" y="12" width="27" height="12" fill="#5e6168"/><path d="M1 23 C4 18 6 14 9 15 S13 20 17 18 S24 17 28 17" fill="none" stroke="#a3a5ab" stroke-width="2"/><path d="M13 13 L22 2 L28 7 L19 17 Z" fill="#a3a5ab"/><path d="M16 10 L21 14" stroke="#5e6168" stroke-width="1.5"/></svg>
<svg class="abs" style="left:774px;top:15px" width="30" height="24"><path d="M1 14 C4 2 6 2 8 12 S11 22 14 12 S18 2 20 12 S24 22 27 12" fill="none" stroke="#a3a5ab" stroke-width="2"/></svg>
<svg class="abs" style="left:824px;top:14px" width="30" height="26"><path d="M1 15 C6 8 9 8 14 13 S22 18 28 10" fill="none" stroke="#a3a5ab" stroke-width="2"/><path d="M14 3 L14 23 M10.5 6.5 L14 3 L17.5 6.5 M10.5 19.5 L14 23 L17.5 19.5" fill="none" stroke="#6a6c73" stroke-width="2"/></svg>
<div class="abs" style="left:868px;top:10px;width:1px;height:38px;background:#343844"></div>
<div class="t" style="left:879px;top:21px;font-size:15px;font-weight:bold;color:#b2b4b9">Duration:</div>
<div class="abs" style="left:957px;top:8px;width:40px;height:40px;border-radius:5px;border:1px solid #323641;background:#232731"></div>
<div class="t" style="left:957px;width:40px;text-align:center;top:21px;font-size:15px;font-weight:bold;color:#b2b4b9">×2</div>
<div class="abs" style="left:1007px;top:8px;width:40px;height:40px;border-radius:5px;border:1px solid #323641;background:#232731"></div>
<div class="t" style="left:1007px;width:40px;text-align:center;top:21px;font-size:15px;font-weight:bold;color:#b2b4b9">÷2</div>
<svg class="abs" style="left:1945px;top:18px" width="18" height="18"><path d="M2 2 L16 16 M16 2 L2 16" stroke="#e8e8e8" stroke-width="1.6"/></svg>
<div class="abs" style="left:0;top:54px;width:36px;height:58px;background:#262a34;border-right:1px solid #2f333d"></div>
<svg class="abs" style="left:10px;top:75px" width="16" height="16"><path d="M2 5.5 H5 L9 2 V14 L5 10.5 H2 Z" fill="#f0f0f0"/><path d="M11 4.5 L13 3 M11.5 8 H14 M11 11.5 L13 13" stroke="#f0f0f0" stroke-width="1.3"/></svg>
<div class="abs" style="left:36px;top:54px;width:67px;height:58px;background:#262a34"></div>
<div class="t" style="left:36px;width:67px;text-align:center;top:67px;font-size:12px;color:#b4b6bb">C</div>
<div class="t" style="left:36px;width:67px;text-align:center;top:85px;font-size:12px;color:#b4b6bb">Major</div>
<div class="abs" style="left:103px;top:54px;width:1878px;height:18px;background:#222329"></div>
<div class="abs" style="left:103px;top:72px;width:1878px;height:40px;background:#1b1c20"></div>
<div class="abs" style="left:0;top:112px;width:1981px;height:1px;background:#3a3c44"></div>
<div class="abs" style="left:0;top:113px;width:35px;height:593px;background:#202228"></div>
<div class="abs" style="left:103px;top:113.0px;width:1878px;height:27.0px;background:#202126"></div>
<div class="abs" style="left:103px;top:140.0px;width:1878px;height:39.4px;background:#202126"></div>
<div class="abs" style="left:103px;top:179.4px;width:1878px;height:39.4px;background:#1c1d21"></div>
<div class="abs" style="left:103px;top:218.8px;width:1878px;height:39.4px;background:#202126"></div>
<div class="abs" style="left:103px;top:258.2px;width:1878px;height:39.4px;background:#1c1d21"></div>
<div class="abs" style="left:103px;top:297.6px;width:1878px;height:39.4px;background:#202126"></div>
<div class="abs" style="left:103px;top:337.0px;width:1878px;height:39.4px;background:#202126"></div>
<div class="abs" style="left:103px;top:376.4px;width:1878px;height:39.4px;background:#1c1d21"></div>
<div class="abs" style="left:103px;top:415.8px;width:1878px;height:39.4px;background:#202126"></div>
<div class="abs" style="left:103px;top:455.2px;width:1878px;height:39.4px;background:#1c1d21"></div>
<div class="abs" style="left:103px;top:494.6px;width:1878px;height:39.4px;background:#202126"></div>
<div class="abs" style="left:103px;top:534.0px;width:1878px;height:39.4px;background:#1c1d21"></div>
<div class="abs" style="left:103px;top:573.4px;width:1878px;height:39.4px;background:#202126"></div>
<div class="abs" style="left:103px;top:612.8px;width:1878px;height:39.4px;background:#202126"></div>
<div class="abs" style="left:103px;top:652.2px;width:1878px;height:39.4px;background:#1c1d21"></div>
<div class="abs" style="left:103px;top:691.6px;width:1878px;height:14.4px;background:#202126"></div>
<div class="abs" style="left:103px;top:113px;width:50px;height:593px;background:linear-gradient(90deg,rgba(0,0,0,0.25),rgba(0,0,0,0))"></div>
<div class="abs" style="left:103px;top:645px;width:1878px;height:61px;background:linear-gradient(180deg,rgba(0,0,0,0),rgba(0,0,0,0.2))"></div>
<div class="abs" style="left:35px;top:113px;width:68px;height:593px;background:#ffffff"></div>
<div class="abs" style="left:35px;top:606.1px;width:68px;height:2.4px;background:#111215"></div>
<div class="abs" style="left:35px;top:538.5px;width:68px;height:2.4px;background:#111215"></div>
<div class="abs" style="left:35px;top:470.9px;width:68px;height:2.4px;background:#111215"></div>
<div class="abs" style="left:35px;top:403.4px;width:68px;height:2.4px;background:#111215"></div>
<div class="abs" style="left:35px;top:335.8px;width:68px;height:2.4px;background:#111215"></div>
<div class="abs" style="left:35px;top:268.2px;width:68px;height:2.4px;background:#111215"></div>
<div class="abs" style="left:35px;top:200.7px;width:68px;height:2.4px;background:#111215"></div>
<div class="abs" style="left:35px;top:133.1px;width:68px;height:2.4px;background:#111215"></div>
<div class="abs" style="left:35px;top:178.9px;width:36px;height:40.5px;background:#1c1d21;border-radius:0 3px 3px 0"></div>
<div class="abs" style="left:35px;top:257.7px;width:36px;height:40.5px;background:#1c1d21;border-radius:0 3px 3px 0"></div>
<div class="abs" style="left:35px;top:375.9px;width:36px;height:40.5px;background:#1c1d21;border-radius:0 3px 3px 0"></div>
<div class="abs" style="left:35px;top:454.7px;width:36px;height:40.5px;background:#1c1d21;border-radius:0 3px 3px 0"></div>
<div class="abs" style="left:35px;top:533.5px;width:36px;height:40.5px;background:#1c1d21;border-radius:0 3px 3px 0"></div>
<div class="abs" style="left:35px;top:651.7px;width:36px;height:40.5px;background:#1c1d21;border-radius:0 3px 3px 0"></div>
<div class="abs" style="left:0;top:336px;width:35px;height:2px;background:#3c3e46"></div>
<div class="t" style="left:8px;top:319px;font-size:15px;color:#f4f4f4">C4</div>
<svg class="abs" style="left:0;top:0" width="1981" height="766">
<line x1="144.5" y1="54" x2="144.5" y2="72" stroke="#4e5058" stroke-width="1"/>
<line x1="144.5" y1="113" x2="144.5" y2="706" stroke="#5c5e65" stroke-width="1" stroke-dasharray="6 4"/>
<line x1="144.5" y1="106" x2="144.5" y2="112" stroke="#8a8b90" stroke-width="1.2"/>
<line x1="194.5" y1="54" x2="194.5" y2="72" stroke="#4e5058" stroke-width="1"/>
<line x1="194.5" y1="113" x2="194.5" y2="706" stroke="#35373d" stroke-width="1" stroke-dasharray="6 4"/>
<line x1="194.5" y1="109" x2="194.5" y2="112" stroke="#6a6b70" stroke-width="1"/>
<line x1="244.5" y1="54" x2="244.5" y2="72" stroke="#4e5058" stroke-width="1"/>
<line x1="244.5" y1="113" x2="244.5" y2="706" stroke="#35373d" stroke-width="1" stroke-dasharray="6 4"/>
<line x1="244.5" y1="109" x2="244.5" y2="112" stroke="#6a6b70" stroke-width="1"/>
<line x1="294.5" y1="54" x2="294.5" y2="72" stroke="#4e5058" stroke-width="1"/>
<line x1="294.5" y1="113" x2="294.5" y2="706" stroke="#35373d" stroke-width="1" stroke-dasharray="6 4"/>
<line x1="294.5" y1="109" x2="294.5" y2="112" stroke="#6a6b70" stroke-width="1"/>
<line x1="344.5" y1="54" x2="344.5" y2="72" stroke="#4e5058" stroke-width="1"/>
<line x1="344.5" y1="113" x2="344.5" y2="706" stroke="#5c5e65" stroke-width="1" stroke-dasharray="6 4"/>
<line x1="344.5" y1="106" x2="344.5" y2="112" stroke="#8a8b90" stroke-width="1.2"/>
<line x1="394.5" y1="54" x2="394.5" y2="72" stroke="#4e5058" stroke-width="1"/>
<line x1="394.5" y1="113" x2="394.5" y2="706" stroke="#35373d" stroke-width="1" stroke-dasharray="6 4"/>
<line x1="394.5" y1="109" x2="394.5" y2="112" stroke="#6a6b70" stroke-width="1"/>
<line x1="444.5" y1="54" x2="444.5" y2="72" stroke="#4e5058" stroke-width="1"/>
<line x1="444.5" y1="113" x2="444.5" y2="706" stroke="#35373d" stroke-width="1" stroke-dasharray="6 4"/>
<line x1="444.5" y1="109" x2="444.5" y2="112" stroke="#6a6b70" stroke-width="1"/>
<line x1="494.5" y1="54" x2="494.5" y2="72" stroke="#4e5058" stroke-width="1"/>
<line x1="494.5" y1="113" x2="494.5" y2="706" stroke="#35373d" stroke-width="1" stroke-dasharray="6 4"/>
<line x1="494.5" y1="109" x2="494.5" y2="112" stroke="#6a6b70" stroke-width="1"/>
<line x1="544.5" y1="54" x2="544.5" y2="72" stroke="#4e5058" stroke-width="1"/>
<line x1="544.5" y1="113" x2="544.5" y2="706" stroke="#707279" stroke-width="1" stroke-dasharray="6 4"/>
<line x1="544.5" y1="72" x2="544.5" y2="112" stroke="#8a8b90" stroke-width="1.2"/>
<line x1="594.5" y1="54" x2="594.5" y2="72" stroke="#4e5058" stroke-width="1"/>
<line x1="594.5" y1="113" x2="594.5" y2="706" stroke="#35373d" stroke-width="1" stroke-dasharray="6 4"/>
<line x1="594.5" y1="109" x2="594.5" y2="112" stroke="#6a6b70" stroke-width="1"/>
<line x1="644.5" y1="54" x2="644.5" y2="72" stroke="#4e5058" stroke-width="1"/>
<line x1="644.5" y1="113" x2="644.5" y2="706" stroke="#35373d" stroke-width="1" stroke-dasharray="6 4"/>
<line x1="644.5" y1="109" x2="644.5" y2="112" stroke="#6a6b70" stroke-width="1"/>
<line x1="694.5" y1="54" x2="694.5" y2="72" stroke="#4e5058" stroke-width="1"/>
<line x1="694.5" y1="113" x2="694.5" y2="706" stroke="#35373d" stroke-width="1" stroke-dasharray="6 4"/>
<line x1="694.5" y1="109" x2="694.5" y2="112" stroke="#6a6b70" stroke-width="1"/>
<line x1="744.5" y1="54" x2="744.5" y2="72" stroke="#4e5058" stroke-width="1"/>
<line x1="744.5" y1="113" x2="744.5" y2="706" stroke="#5c5e65" stroke-width="1" stroke-dasharray="6 4"/>
<line x1="744.5" y1="106" x2="744.5" y2="112" stroke="#8a8b90" stroke-width="1.2"/>
<line x1="794.5" y1="54" x2="794.5" y2="72" stroke="#4e5058" stroke-width="1"/>
<line x1="794.5" y1="113" x2="794.5" y2="706" stroke="#35373d" stroke-width="1" stroke-dasharray="6 4"/>
<line x1="794.5" y1="109" x2="794.5" y2="112" stroke="#6a6b70" stroke-width="1"/>
<line x1="844.5" y1="54" x2="844.5" y2="72" stroke="#4e5058" stroke-width="1"/>
<line x1="844.5" y1="113" x2="844.5" y2="706" stroke="#35373d" stroke-width="1" stroke-dasharray="6 4"/>
<line x1="844.5" y1="109" x2="844.5" y2="112" stroke="#6a6b70" stroke-width="1"/>
<line x1="894.5" y1="54" x2="894.5" y2="72" stroke="#4e5058" stroke-width="1"/>
<line x1="894.5" y1="113" x2="894.5" y2="706" stroke="#35373d" stroke-width="1" stroke-dasharray="6 4"/>
<line x1="894.5" y1="109" x2="894.5" y2="112" stroke="#6a6b70" stroke-width="1"/>
<line x1="944.5" y1="54" x2="944.5" y2="72" stroke="#4e5058" stroke-width="1"/>
<line x1="944.5" y1="113" x2="944.5" y2="706" stroke="#5c5e65" stroke-width="1" stroke-dasharray="6 4"/>
<line x1="944.5" y1="106" x2="944.5" y2="112" stroke="#8a8b90" stroke-width="1.2"/>
<line x1="994.5" y1="54" x2="994.5" y2="72" stroke="#4e5058" stroke-width="1"/>
<line x1="994.5" y1="113" x2="994.5" y2="706" stroke="#35373d" stroke-width="1" stroke-dasharray="6 4"/>
<line x1="994.5" y1="109" x2="994.5" y2="112" stroke="#6a6b70" stroke-width="1"/>
<line x1="1044.5" y1="54" x2="1044.5" y2="72" stroke="#4e5058" stroke-width="1"/>
<line x1="1044.5" y1="113" x2="1044.5" y2="706" stroke="#35373d" stroke-width="1" stroke-dasharray="6 4"/>
<line x1="1044.5" y1="109" x2="1044.5" y2="112" stroke="#6a6b70" stroke-width="1"/>
<line x1="1094.5" y1="54" x2="1094.5" y2="72" stroke="#4e5058" stroke-width="1"/>
<line x1="1094.5" y1="113" x2="1094.5" y2="706" stroke="#35373d" stroke-width="1" stroke-dasharray="6 4"/>
<line x1="1094.5" y1="109" x2="1094.5" y2="112" stroke="#6a6b70" stroke-width="1"/>
<line x1="1144.5" y1="54" x2="1144.5" y2="72" stroke="#4e5058" stroke-width="1"/>
<line x1="1144.5" y1="113" x2="1144.5" y2="706" stroke="#5c5e65" stroke-width="1" stroke-dasharray="6 4"/>
<line x1="1144.5" y1="106" x2="1144.5" y2="112" stroke="#8a8b90" stroke-width="1.2"/>
<line x1="1194.5" y1="54" x2="1194.5" y2="72" stroke="#4e5058" stroke-width="1"/>
<line x1="1194.5" y1="113" x2="1194.5" y2="706" stroke="#35373d" stroke-width="1" stroke-dasharray="6 4"/>
<line x1="1194.5" y1="109" x2="1194.5" y2="112" stroke="#6a6b70" stroke-width="1"/>
<line x1="1244.5" y1="54" x2="1244.5" y2="72" stroke="#4e5058" stroke-width="1"/>
<line x1="1244.5" y1="113" x2="1244.5" y2="706" stroke="#35373d" stroke-width="1" stroke-dasharray="6 4"/>
<line x1="1244.5" y1="109" x2="1244.5" y2="112" stroke="#6a6b70" stroke-width="1"/>
<line x1="1294.5" y1="54" x2="1294.5" y2="72" stroke="#4e5058" stroke-width="1"/>
<line x1="1294.5" y1="113" x2="1294.5" y2="706" stroke="#35373d" stroke-width="1" stroke-dasharray="6 4"/>
<line x1="1294.5" y1="109" x2="1294.5" y2="112" stroke="#6a6b70" stroke-width="1"/>
<line x1="1344.5" y1="54" x2="1344.5" y2="72" stroke="#4e5058" stroke-width="1"/>
<line x1="1344.5" y1="113" x2="1344.5" y2="706" stroke="#707279" stroke-width="1" stroke-dasharray="6 4"/>
<line x1="1344.5" y1="72" x2="1344.5" y2="112" stroke="#8a8b90" stroke-width="1.2"/>
<line x1="1394.5" y1="54" x2="1394.5" y2="72" stroke="#4e5058" stroke-width="1"/>
<line x1="1394.5" y1="113" x2="1394.5" y2="706" stroke="#35373d" stroke-width="1" stroke-dasharray="6 4"/>
<line x1="1394.5" y1="109" x2="1394.5" y2="112" stroke="#6a6b70" stroke-width="1"/>
<line x1="1444.5" y1="54" x2="1444.5" y2="72" stroke="#4e5058" stroke-width="1"/>
<line x1="1444.5" y1="113" x2="1444.5" y2="706" stroke="#35373d" stroke-width="1" stroke-dasharray="6 4"/>
<line x1="1444.5" y1="109" x2="1444.5" y2="112" stroke="#6a6b70" stroke-width="1"/>
<line x1="1494.5" y1="54" x2="1494.5" y2="72" stroke="#4e5058" stroke-width="1"/>
<line x1="1494.5" y1="113" x2="1494.5" y2="706" stroke="#35373d" stroke-width="1" stroke-dasharray="6 4"/>
<line x1="1494.5" y1="109" x2="1494.5" y2="112" stroke="#6a6b70" stroke-width="1"/>
<line x1="1544.5" y1="54" x2="1544.5" y2="72" stroke="#4e5058" stroke-width="1"/>
<line x1="1544.5" y1="113" x2="1544.5" y2="706" stroke="#5c5e65" stroke-width="1" stroke-dasharray="6 4"/>
<line x1="1544.5" y1="106" x2="1544.5" y2="112" stroke="#8a8b90" stroke-width="1.2"/>
<line x1="1594.5" y1="54" x2="1594.5" y2="72" stroke="#4e5058" stroke-width="1"/>
<line x1="1594.5" y1="113" x2="1594.5" y2="706" stroke="#35373d" stroke-width="1" stroke-dasharray="6 4"/>
<line x1="1594.5" y1="109" x2="1594.5" y2="112" stroke="#6a6b70" stroke-width="1"/>
<line x1="1644.5" y1="54" x2="1644.5" y2="72" stroke="#4e5058" stroke-width="1"/>
<line x1="1644.5" y1="113" x2="1644.5" y2="706" stroke="#35373d" stroke-width="1" stroke-dasharray="6 4"/>
<line x1="1644.5" y1="109" x2="1644.5" y2="112" stroke="#6a6b70" stroke-width="1"/>
<line x1="1694.5" y1="54" x2="1694.5" y2="72" stroke="#4e5058" stroke-width="1"/>
<line x1="1694.5" y1="113" x2="1694.5" y2="706" stroke="#35373d" stroke-width="1" stroke-dasharray="6 4"/>
<line x1="1694.5" y1="109" x2="1694.5" y2="112" stroke="#6a6b70" stroke-width="1"/>
<line x1="1744.5" y1="54" x2="1744.5" y2="72" stroke="#4e5058" stroke-width="1"/>
<line x1="1744.5" y1="113" x2="1744.5" y2="706" stroke="#5c5e65" stroke-width="1" stroke-dasharray="6 4"/>
<line x1="1744.5" y1="106" x2="1744.5" y2="112" stroke="#8a8b90" stroke-width="1.2"/>
<line x1="1794.5" y1="54" x2="1794.5" y2="72" stroke="#4e5058" stroke-width="1"/>
<line x1="1794.5" y1="113" x2="1794.5" y2="706" stroke="#35373d" stroke-width="1" stroke-dasharray="6 4"/>
<line x1="1794.5" y1="109" x2="1794.5" y2="112" stroke="#6a6b70" stroke-width="1"/>
<line x1="1844.5" y1="54" x2="1844.5" y2="72" stroke="#4e5058" stroke-width="1"/>
<line x1="1844.5" y1="113" x2="1844.5" y2="706" stroke="#35373d" stroke-width="1" stroke-dasharray="6 4"/>
<line x1="1844.5" y1="109" x2="1844.5" y2="112" stroke="#6a6b70" stroke-width="1"/>
<line x1="1894.5" y1="54" x2="1894.5" y2="72" stroke="#4e5058" stroke-width="1"/>
<line x1="1894.5" y1="113" x2="1894.5" y2="706" stroke="#35373d" stroke-width="1" stroke-dasharray="6 4"/>
<line x1="1894.5" y1="109" x2="1894.5" y2="112" stroke="#6a6b70" stroke-width="1"/>
<line x1="1944.5" y1="54" x2="1944.5" y2="72" stroke="#4e5058" stroke-width="1"/>
<line x1="1944.5" y1="113" x2="1944.5" y2="706" stroke="#5c5e65" stroke-width="1" stroke-dasharray="6 4"/>
<line x1="1944.5" y1="106" x2="1944.5" y2="112" stroke="#8a8b90" stroke-width="1.2"/>
</svg>
<div class="t" style="left:149px;top:98.5px;font-size:12px;color:#a9aab0">8.3</div>
<div class="t" style="left:349px;top:98.5px;font-size:12px;color:#a9aab0">8.4</div>
<div class="t" style="left:549px;top:98.5px;font-size:12px;font-weight:bold;color:#f4f4f4">9</div>
<div class="t" style="left:749px;top:98.5px;font-size:12px;color:#a9aab0">9.2</div>
<div class="t" style="left:949px;top:98.5px;font-size:12px;color:#a9aab0">9.3</div>
<div class="t" style="left:1149px;top:98.5px;font-size:12px;color:#a9aab0">9.4</div>
<div class="t" style="left:1349px;top:98.5px;font-size:12px;font-weight:bold;color:#f4f4f4">10</div>
<div class="t" style="left:1549px;top:98.5px;font-size:12px;color:#a9aab0">10.2</div>
<div class="t" style="left:1749px;top:98.5px;font-size:12px;color:#a9aab0">10.3</div>
<div class="t" style="left:1949px;top:98.5px;font-size:12px;color:#a9aab0">10.4</div>
<div class="abs" style="left:280px;top:692px;width:9px;height:9px;border-radius:50%;background:#303238"></div>
<div class="abs" style="left:296px;top:691px;width:1522px;height:10px;border-radius:5px;background:#2b2d33"></div>
<div class="abs" style="left:1823px;top:692px;width:9px;height:9px;border-radius:50%;background:#303238"></div>
<div class="abs" style="left:243.0px;top:297.6px;width:26.6px;height:39.4px;background:#05ef3c;box-shadow:0 0 0 0.8px rgba(0,40,10,0.6)"></div>
<div class="t" style="left:248.0px;top:309.6px;font-size:15.5px;color:#06140a">No</div>
<div class="abs" style="left:269.6px;top:218.8px;width:74.9px;height:39.4px;background:#05ef3c;box-shadow:0 0 0 0.8px rgba(0,40,10,0.6)"></div>
<div class="abs" style="left:275.6px;top:238.3px;width:5.5px;height:2.2px;background:#0a2a10"></div>
<div class="abs" style="left:345.0px;top:297.6px;width:12.2px;height:39.4px;background:#05ef3c;box-shadow:0 0 0 0.8px rgba(0,40,10,0.6)"></div>
<div class="abs" style="left:357.2px;top:218.8px;width:87.4px;height:39.4px;background:#05ef3c;box-shadow:0 0 0 0.8px rgba(0,40,10,0.6)"></div>
<div class="abs" style="left:363.2px;top:238.3px;width:5.5px;height:2.2px;background:#0a2a10"></div>
<div class="abs" style="left:445.0px;top:297.6px;width:28.5px;height:39.4px;background:#05ef3c;box-shadow:0 0 0 0.8px rgba(0,40,10,0.6)"></div>
<div class="t" style="left:450.0px;top:309.6px;font-size:15.5px;color:#06140a">no</div>
<div class="abs" style="left:473.5px;top:218.8px;width:69.5px;height:39.4px;background:#05ef3c;box-shadow:0 0 0 0.8px rgba(0,40,10,0.6)"></div>
<div class="abs" style="left:479.5px;top:238.3px;width:5.5px;height:2.2px;background:#0a2a10"></div>
<div class="abs" style="left:544.0px;top:218.8px;width:100.7px;height:39.4px;background:#05ef3c;box-shadow:0 0 0 0.8px rgba(0,40,10,0.6)"></div>
<div class="t" style="left:549.0px;top:230.8px;font-size:15.5px;color:#06140a">locks</div>
<div class="abs" style="left:653.8px;top:297.6px;width:31.9px;height:39.4px;background:#05ef3c;box-shadow:0 0 0 0.8px rgba(0,40,10,0.6)"></div>
<div class="t" style="left:658.8px;top:309.6px;font-size:15.5px;color:#06140a">no</div>
<div class="abs" style="left:685.7px;top:218.8px;width:70.3px;height:39.4px;background:#05ef3c;box-shadow:0 0 0 0.8px rgba(0,40,10,0.6)"></div>
<div class="abs" style="left:691.7px;top:238.3px;width:5.5px;height:2.2px;background:#0a2a10"></div>
<div class="abs" style="left:756.0px;top:297.6px;width:29.8px;height:39.4px;background:#05ef3c;box-shadow:0 0 0 0.8px rgba(0,40,10,0.6)"></div>
<div class="t" style="left:761.0px;top:309.6px;font-size:15.5px;color:#06140a">…</div>
<div class="abs" style="left:785.8px;top:218.8px;width:83.4px;height:39.4px;background:#05ef3c;box-shadow:0 0 0 0.8px rgba(0,40,10,0.6)"></div>
<div class="abs" style="left:791.8px;top:238.3px;width:5.5px;height:2.2px;background:#0a2a10"></div>
<div class="abs" style="left:870.2px;top:218.8px;width:73.8px;height:39.4px;background:#05ef3c;box-shadow:0 0 0 0.8px rgba(0,40,10,0.6)"></div>
<div class="t" style="left:875.2px;top:230.8px;font-size:15.5px;color:#06140a">to</div>
<div class="abs" style="left:971.6px;top:218.8px;width:26.4px;height:39.4px;background:#05ef3c;box-shadow:0 0 0 0.8px rgba(0,40,10,0.6)"></div>
<div class="t" style="left:976.6px;top:230.8px;font-size:15.5px;color:#06140a">…</div>
<div class="abs" style="left:999.0px;top:415.8px;width:144.3px;height:39.4px;background:#05ef3c;box-shadow:0 0 0 0.8px rgba(0,40,10,0.6)"></div>
<div class="abs" style="left:1005.0px;top:435.3px;width:5.5px;height:2.2px;background:#0a2a10"></div>
<div class="abs" style="left:1143.5px;top:297.6px;width:19.5px;height:39.4px;background:#05ef3c;box-shadow:0 0 0 0.8px rgba(0,40,10,0.6)"></div>
<div class="abs" style="left:1163.2px;top:218.8px;width:92.0px;height:39.4px;background:#05ef3c;box-shadow:0 0 0 0.8px rgba(0,40,10,0.6)"></div>
<div class="abs" style="left:1169.2px;top:238.3px;width:5.5px;height:2.2px;background:#0a2a10"></div>
<div class="abs" style="left:1255.5px;top:297.6px;width:35.7px;height:39.4px;background:#05ef3c;box-shadow:0 0 0 0.8px rgba(0,40,10,0.6)"></div>
<div class="t" style="left:1260.5px;top:309.6px;font-size:15.5px;color:#06140a">ain't</div>
<div class="abs" style="left:1291.2px;top:218.8px;width:51.8px;height:39.4px;background:#05ef3c;box-shadow:0 0 0 0.8px rgba(0,40,10,0.6)"></div>
<div class="abs" style="left:1297.2px;top:238.3px;width:5.5px;height:2.2px;background:#0a2a10"></div>
<div class="abs" style="left:1344.0px;top:218.8px;width:51.3px;height:39.4px;background:#05ef3c;box-shadow:0 0 0 0.8px rgba(0,40,10,0.6)"></div>
<div class="t" style="left:1349.0px;top:230.8px;font-size:15.5px;color:#06140a">mo…</div>
<div class="abs" style="left:1395.3px;top:297.6px;width:48.7px;height:39.4px;background:#05ef3c;box-shadow:0 0 0 0.8px rgba(0,40,10,0.6)"></div>
<div class="t" style="left:1400.3px;top:309.6px;font-size:15.5px;color:#06140a">mo…</div>
<div class="abs" style="left:1444.0px;top:218.8px;width:99.5px;height:39.4px;background:#05ef3c;box-shadow:0 0 0 0.8px rgba(0,40,10,0.6)"></div>
<div class="t" style="left:1449.0px;top:230.8px;font-size:15.5px;color:#06140a">i'm</div>
<div class="abs" style="left:1544.6px;top:218.8px;width:49.0px;height:39.4px;background:#05ef3c;box-shadow:0 0 0 0.8px rgba(0,40,10,0.6)"></div>
<div class="t" style="left:1549.6px;top:230.8px;font-size:15.5px;color:#06140a">taki…</div>
<div class="abs" style="left:1593.6px;top:297.6px;width:49.4px;height:39.4px;background:#05ef3c;box-shadow:0 0 0 0.8px rgba(0,40,10,0.6)"></div>
<div class="t" style="left:1598.6px;top:309.6px;font-size:15.5px;color:#06140a">taki…</div>
<div class="abs" style="left:1644.0px;top:297.6px;width:11.8px;height:39.4px;background:#05ef3c;box-shadow:0 0 0 0.8px rgba(0,40,10,0.6)"></div>
<div class="abs" style="left:1656.3px;top:218.8px;width:87.2px;height:39.4px;background:#05ef3c;box-shadow:0 0 0 0.8px rgba(0,40,10,0.6)"></div>
<div class="abs" style="left:1662.3px;top:238.3px;width:5.5px;height:2.2px;background:#0a2a10"></div>
<div class="abs" style="left:1743.5px;top:415.8px;width:150.3px;height:39.4px;background:#05ef3c;box-shadow:0 0 0 0.8px rgba(0,40,10,0.6)"></div>
<div class="t" style="left:1748.5px;top:427.8px;font-size:15.5px;color:#06140a">time</div>
<div class="abs" style="left:543.0px;top:218.8px;width:1.2px;height:39.4px;background:#0b3a18"></div>
<div class="abs" style="left:869.2px;top:218.8px;width:1.2px;height:39.4px;background:#0b3a18"></div>
<div class="abs" style="left:1343.0px;top:218.8px;width:1.2px;height:39.4px;background:#0b3a18"></div>
<div class="abs" style="left:1543.5px;top:218.8px;width:1.2px;height:39.4px;background:#0b3a18"></div>
<div class="abs" style="left:1643.0px;top:297.6px;width:1.2px;height:39.4px;background:#0b3a18"></div>
<div class="t" style="left:243.0px;top:276.1px;font-size:15.5px;letter-spacing:0.5px;color:#b9bbc0">[…</div>
<div class="t" style="left:445.0px;top:276.1px;font-size:15.5px;letter-spacing:0.5px;color:#b9bbc0">[…</div>
<div class="t" style="left:544.7px;top:197.3px;font-size:15.5px;letter-spacing:0.5px;color:#b9bbc0">[l][aa][k][s]</div>
<div class="t" style="left:654.6px;top:276.1px;font-size:15.5px;letter-spacing:0.5px;color:#b9bbc0">[n…</div>
<div class="t" style="left:756.0px;top:276.1px;font-size:15.5px;letter-spacing:0.5px;color:#b9bbc0">[…</div>
<div class="t" style="left:870.0px;top:197.3px;font-size:15.5px;letter-spacing:0.5px;color:#b9bbc0">[t][uw]</div>
<div class="t" style="left:972.0px;top:197.3px;font-size:15.5px;letter-spacing:0.5px;color:#b9bbc0">[…</div>
<div class="t" style="left:1256.0px;top:276.1px;font-size:15.5px;letter-spacing:0.5px;color:#b9bbc0">* […</div>
<div class="t" style="left:1344.0px;top:197.3px;font-size:15.5px;letter-spacing:0.5px;color:#b9bbc0">[m][…</div>
<div class="t" style="left:1396.0px;top:276.1px;font-size:15.5px;letter-spacing:0.5px;color:#b9bbc0">[n][iy]</div>
<div class="t" style="left:1445.4px;top:197.3px;font-size:15.5px;letter-spacing:0.5px;color:#b9bbc0">[ay][m]</div>
<div class="t" style="left:1544.6px;top:197.3px;font-size:15.5px;letter-spacing:0.5px;color:#b9bbc0">[t][ey]</div>
<div class="t" style="left:1594.7px;top:276.1px;font-size:15.5px;letter-spacing:0.5px;color:#b9bbc0">[k][i…</div>
<div class="t" style="left:1744.3px;top:394.3px;font-size:15.5px;letter-spacing:0.5px;color:#b9bbc0">[t][ay][m]</div>
<div class="abs" style="left:1868.3px;top:236.6px;width:75.1px;height:4.5px;background:#6b5b9c"></div>
<div class="abs" style="left:1968.4px;top:236.6px;width:12.6px;height:4.5px;background:#6b5b9c"></div>
<div class="abs" style="left:1843.6px;top:315.6px;width:24.7px;height:4.5px;background:#6b5b9c"></div>
<div class="abs" style="left:1943.7px;top:315.6px;width:24.7px;height:4.5px;background:#6b5b9c"></div>
<div class="t" style="left:255px;top:487px;font-size:21px;color:#b4b6bb">No chains no locks no walls to climb Time ain't money I'm takin' my time</div>
<svg class="abs" style="left:0;top:0" width="1981" height="766">
<path d="M223.2 704.8 C223.4 676.6 223.8 570.7 224.4 535.8 C224.7 519.6 225.0 504.8 226.8 495.3 C228.2 488.0 232.8 485.7 235.1 478.6 C237.5 471.4 239.6 463.1 241.0 452.4 C242.6 440.1 243.9 420.2 244.6 404.8 C245.3 389.3 244.5 370.6 245.2 359.7 C245.7 351.5 247.2 346.0 248.8 339.5 C250.4 333.0 252.1 325.8 254.6 320.8 C257.1 315.7 262.0 314.8 264.0 309.2 C266.2 303.2 266.4 294.5 267.6 284.7 C268.8 274.6 270.0 256.3 271.2 248.6 C271.9 244.4 273.5 240.5 274.8 238.5 C275.9 236.9 277.5 236.0 279.2 236.4 C280.9 236.8 282.6 239.4 285.0 240.7 C287.4 242.0 290.0 243.5 293.6 244.0 C297.4 244.5 303.9 243.5 308.0 244.0 C312.1 244.5 315.5 244.8 318.1 247.2 C320.8 249.7 322.7 253.7 323.9 258.7 C325.6 265.4 326.8 276.8 328.2 287.6 C329.6 298.4 331.1 312.2 332.5 323.7 C333.9 335.2 335.4 350.1 336.9 356.8 C337.6 360.1 339.8 364.5 341.2 364.0 C342.6 363.5 344.5 358.2 345.5 354.0 C346.8 348.5 347.9 336.4 349.1 330.9 C350.0 326.7 351.4 320.1 352.7 320.8 C354.0 321.5 355.8 335.9 357.0 335.2 C358.2 334.5 359.2 324.0 360.0 316.4 C361.2 304.1 362.9 274.3 364.3 261.6 C365.3 252.8 366.9 244.4 368.6 240.0 C369.7 237.1 372.5 235.5 374.4 235.0 C376.3 234.5 378.0 236.0 380.2 237.0 C382.4 238.0 384.3 240.0 387.4 240.7 C390.5 241.4 394.9 241.7 399.0 241.4 C403.1 241.1 408.1 238.8 411.9 238.8 C415.7 238.8 419.4 239.5 422.0 241.4 C424.6 243.3 426.5 246.0 427.8 250.0 C429.5 255.3 430.7 266.5 432.1 273.2 C433.5 280.0 435.0 283.5 436.4 290.5 C438.0 298.2 440.1 313.0 441.5 319.3 C442.4 323.0 443.5 328.0 445.1 328.0 C446.7 328.0 449.2 322.7 450.9 319.3 C452.6 315.9 453.5 306.6 455.2 307.8 C456.9 309.0 459.2 322.4 461.0 326.5 C462.2 329.3 465.3 335.3 466.0 332.3 C467.4 326.3 468.4 305.6 469.6 290.5 C470.8 275.4 472.0 250.7 473.2 241.4 C473.6 238.5 475.5 235.9 476.8 234.9 C478.1 233.9 480.0 236.3 481.2 235.6 C482.4 234.9 482.1 230.1 484.0 230.6 C485.9 231.1 488.1 237.4 492.7 238.5 C497.3 239.6 503.9 237.3 511.4 237.0 C519.9 236.6 532.0 236.1 544.0 236.3 C556.0 236.5 575.5 235.6 583.6 238.0 C589.6 239.8 591.1 244.7 592.6 250.7 C594.5 258.2 595.0 270.0 595.1 283.0 C595.6 358.6 595.4 633.8 595.5 704.0" fill="none" stroke="#a2a3a7" stroke-width="1.7" stroke-linejoin="round" stroke-linecap="round"/>
<path d="M639.1 385.7 C639.3 370.6 639.5 307.8 640.5 295.3 C641.0 289.0 643.9 306.5 645.3 310.4 C646.5 313.7 647.8 316.8 648.8 318.4 C649.5 319.5 650.7 321.1 651.5 320.1 C652.5 318.9 653.8 311.7 655.0 311.3 C656.2 310.9 656.2 316.5 658.6 317.5 C661.0 318.5 666.7 319.0 669.2 317.5 C671.7 316.0 672.8 312.5 673.7 308.6 C675.0 303.0 675.6 292.7 677.2 283.8 C678.8 274.9 681.2 261.7 683.4 255.4 C685.0 250.9 687.8 247.6 690.5 245.7 C693.2 243.8 697.3 244.0 699.4 243.9 C700.8 243.8 701.5 245.0 702.9 244.8 C705.5 244.4 711.8 241.9 715.3 241.3 C718.8 240.7 722.3 240.6 724.2 241.3 C726.1 242.0 725.3 244.8 726.8 245.7 C728.3 246.6 731.5 244.6 733.0 246.6 C734.6 248.8 735.6 253.9 736.6 259.0 C737.8 265.2 738.6 276.7 740.1 283.8 C741.6 290.9 743.3 295.9 745.4 301.5 C747.5 307.1 750.1 314.6 752.5 317.5 C754.3 319.8 757.2 318.5 759.6 319.2 C762.0 319.9 764.3 321.8 766.7 321.9 C769.1 322.0 771.8 322.2 773.8 320.1 C775.9 317.9 777.5 313.4 779.1 308.6 C780.9 303.1 782.6 295.9 784.4 287.3 C786.2 278.7 787.9 264.4 789.7 257.2 C791.1 251.6 791.9 246.1 795.1 243.9 C798.4 241.7 805.1 244.2 809.2 243.9 C813.3 243.6 816.9 242.7 819.9 242.1 C822.8 241.5 825.5 240.2 827.0 240.4 C828.2 240.5 827.5 242.8 828.7 243.0 C831.7 243.4 838.3 243.3 844.7 243.0 C851.5 242.7 860.6 241.9 869.5 241.3 C878.4 240.6 887.0 239.6 897.9 239.1 C908.8 238.7 927.4 238.0 935.1 238.6 C939.1 238.9 942.5 242.3 944.0 243.0" fill="none" stroke="#a2a3a7" stroke-width="1.7" stroke-linejoin="round" stroke-linecap="round"/>
<path d="M972.3 218.2 C973.0 223.4 975.2 244.5 976.7 249.2 C977.3 251.2 980.2 248.4 981.2 246.6 C982.8 243.5 984.9 233.7 986.5 230.6 C987.4 228.8 990.4 226.0 990.9 228.0 C991.9 232.1 992.1 244.4 992.7 255.4 C993.7 274.1 995.9 319.6 997.1 340.5 C998.0 356.7 999.0 368.3 999.6 381.0 C1000.2 393.7 1000.4 403.6 1000.8 416.7 C1001.2 429.8 1001.3 449.9 1002.0 459.6 C1002.5 465.9 1003.3 475.4 1005.1 475.0 C1006.9 474.6 1010.1 464.3 1012.7 457.2 C1015.4 450.1 1018.0 435.2 1021.0 432.2 C1024.0 429.2 1026.0 438.1 1030.6 439.3 C1035.2 440.5 1043.2 439.6 1048.4 439.3 C1053.6 439.0 1056.7 437.5 1061.5 437.7 C1066.3 437.9 1072.0 440.2 1077.0 440.5 C1082.0 440.8 1086.1 439.8 1091.3 439.3 C1096.5 438.8 1103.6 437.7 1108.0 437.7 C1111.9 437.7 1114.7 436.8 1117.5 439.3 C1120.3 441.7 1122.8 446.7 1124.6 452.4 C1126.8 459.3 1129.6 469.4 1130.6 481.0 C1132.2 498.7 1133.5 545.5 1134.1 558.4" fill="none" stroke="#a2a3a7" stroke-width="1.7" stroke-linejoin="round" stroke-linecap="round"/>
<path d="M1140.1 685.8 C1140.3 662.8 1140.7 586.6 1141.3 547.7 C1141.9 509.6 1143.0 480.2 1143.7 452.4 C1144.4 424.6 1145.2 398.2 1145.6 381.0 C1145.9 368.4 1145.5 358.2 1146.2 349.4 C1146.9 340.8 1148.7 331.4 1149.7 328.1 C1150.1 326.9 1151.9 328.7 1152.4 329.9 C1153.4 332.1 1154.9 345.5 1155.9 341.4 C1156.9 337.3 1157.7 319.4 1158.6 305.1 C1159.5 290.8 1160.0 266.3 1161.2 255.4 C1161.9 248.8 1163.8 243.0 1165.7 239.5 C1167.4 236.4 1170.4 234.4 1172.8 234.2 C1175.2 234.1 1177.2 238.3 1179.9 238.6 C1182.6 238.9 1185.8 236.9 1188.7 236.0 C1191.7 235.1 1194.6 233.3 1197.6 233.3 C1200.5 233.3 1203.5 234.8 1206.4 236.0 C1209.4 237.2 1211.6 239.7 1215.3 240.4 C1219.0 241.1 1225.5 238.8 1228.6 240.4 C1231.7 242.0 1232.5 245.9 1233.9 250.1 C1235.5 255.0 1236.4 262.2 1238.3 269.6 C1240.2 277.0 1243.0 285.8 1245.4 294.4 C1247.8 303.0 1250.1 316.4 1252.5 321.0 C1253.8 323.5 1256.9 321.4 1259.6 321.9 C1262.3 322.3 1265.5 323.9 1268.5 323.7 C1271.5 323.6 1274.9 322.9 1277.3 321.0 C1279.7 319.1 1281.5 316.2 1282.7 312.2 C1284.3 306.6 1285.6 296.8 1287.1 287.3 C1288.6 277.8 1289.9 263.4 1291.5 255.4 C1292.8 248.8 1294.7 242.4 1296.8 239.5 C1298.5 237.1 1301.5 237.1 1303.9 237.7 C1306.3 238.3 1308.3 241.4 1311.0 243.0 C1313.7 244.6 1317.0 246.6 1319.9 247.5 C1322.9 248.4 1325.6 247.8 1328.7 248.4 C1331.8 249.0 1336.1 252.2 1338.5 251.0 C1340.9 249.8 1341.7 245.4 1342.9 241.3 C1344.5 235.8 1346.6 221.5 1348.2 218.2 C1349.2 216.1 1351.5 219.8 1352.7 221.8 C1354.3 224.5 1355.5 232.0 1358.0 234.2 C1360.5 236.4 1364.8 234.8 1367.7 235.1 C1370.7 235.4 1374.0 233.3 1375.7 236.0 C1377.8 239.4 1378.6 247.6 1380.1 255.4 C1381.7 263.9 1383.7 278.7 1385.5 287.3 C1387.1 295.2 1388.5 301.8 1390.8 306.8 C1393.1 311.8 1395.8 315.1 1399.6 317.5 C1403.4 319.9 1408.5 320.7 1413.8 321.0 C1419.1 321.3 1427.7 321.9 1431.5 319.2 C1435.3 316.6 1435.6 311.0 1436.9 305.1 C1438.7 296.8 1440.4 280.5 1442.2 269.6 C1444.0 258.7 1445.4 244.8 1447.5 239.5 C1448.6 236.8 1451.7 237.7 1454.6 237.7 C1457.5 237.7 1461.1 239.1 1465.2 239.5 C1469.3 239.9 1475.3 240.7 1479.4 240.4 C1483.5 240.1 1486.9 237.2 1490.0 237.7 C1493.1 238.2 1495.4 241.7 1498.0 243.3 C1500.6 244.8 1503.8 244.1 1505.4 247.0 C1507.4 250.7 1509.0 257.9 1509.8 265.4 C1510.9 276.1 1511.8 293.0 1512.0 311.5 C1512.6 384.5 1513.2 638.2 1513.5 703.6" fill="none" stroke="#a2a3a7" stroke-width="1.7" stroke-linejoin="round" stroke-linecap="round"/>
<path d="M1589.4 703.6 C1589.8 637.3 1590.7 370.8 1592.0 306.0 C1592.1 301.8 1594.8 312.9 1597.5 315.0 C1600.2 317.1 1604.0 317.7 1608.5 318.8 C1613.4 320.0 1621.5 322.5 1627.0 322.5 C1632.5 322.5 1638.3 320.6 1641.6 318.8 C1644.8 317.0 1645.2 310.9 1647.0 311.5 C1648.8 312.1 1651.1 322.5 1652.7 322.5 C1654.3 322.5 1656.0 316.1 1656.4 311.5 C1657.3 300.4 1657.5 269.4 1658.2 256.2 C1658.7 246.6 1659.6 236.5 1660.7 232.3 C1661.1 230.6 1663.5 229.9 1664.8 231.0 C1666.4 232.4 1667.8 238.0 1670.3 240.5 C1672.8 243.0 1676.7 246.0 1679.9 246.0 C1683.1 246.0 1686.8 242.1 1689.5 240.5 C1692.2 238.9 1695.2 237.1 1696.3 236.4" fill="none" stroke="#a2a3a7" stroke-width="1.7" stroke-linejoin="round" stroke-linecap="round"/>
<path d="M1741.5 705.0 C1741.7 663.4 1742.1 509.0 1742.4 455.4 C1742.6 426.5 1742.8 402.5 1743.6 383.2 C1744.3 365.8 1746.0 349.1 1747.3 339.9 C1748.0 335.0 1750.1 328.8 1751.6 328.3 C1753.0 327.8 1755.0 333.2 1756.0 337.0 C1757.7 343.7 1759.8 356.0 1761.8 368.7 C1764.0 382.7 1766.6 407.7 1769.0 420.7 C1771.0 431.3 1773.3 443.3 1776.2 446.7 C1779.1 450.1 1782.9 443.3 1786.3 440.9 C1789.7 438.5 1791.2 433.3 1796.4 432.3 C1802.7 431.1 1818.3 432.7 1823.8 433.7 C1826.8 434.3 1826.6 437.9 1829.6 438.6 C1833.0 439.4 1839.9 438.9 1844.0 438.6 C1848.1 438.3 1850.7 436.2 1854.1 436.6 C1857.5 437.0 1861.8 439.4 1864.2 440.9 C1866.3 442.2 1866.4 444.1 1868.6 445.3 C1870.8 446.5 1875.0 446.4 1877.2 448.1 C1879.4 449.8 1880.4 452.3 1881.6 455.4 C1882.8 458.5 1882.8 464.7 1884.5 466.9 C1886.2 469.1 1889.5 469.4 1891.7 468.4 C1893.9 467.4 1896.5 462.3 1897.4 461.1" fill="none" stroke="#a2a3a7" stroke-width="1.7" stroke-linejoin="round" stroke-linecap="round"/>
<polyline points="1546.6,703.6 1549.6,341.0 1551.8,341.0 1555.1,703.6" fill="none" stroke="#a2a3a7" stroke-width="1.7" stroke-linejoin="round"/>
<path d="M954.6 240.4 C954.9 236.3 955.8 223.4 956.5 216.0 C957.2 208.6 958.1 201.0 959.0 196.0 C959.7 192.0 960.7 187.3 961.7 186.3 C962.7 185.3 964.1 188.2 965.0 190.0 C966.2 192.5 967.8 197.2 969.0 201.0 C970.2 204.8 971.8 210.9 972.3 212.9" fill="none" stroke="#a2a3a7" stroke-width="1.7" stroke-dasharray="3 3"/>
<path d="M1897.4 461.1 C1898.6 465.0 1903.3 474.6 1904.7 484.2 C1906.6 497.7 1907.8 520.3 1909.0 542.0 C1910.2 563.7 1911.2 587.0 1911.9 614.2 C1912.6 641.4 1913.1 689.9 1913.3 705.0" fill="none" stroke="#a2a3a7" stroke-width="1.7" stroke-dasharray="3 3"/>
<defs><clipPath id="noteclip"><rect x="243.0" y="297.6" width="26.6" height="39.4"/><rect x="269.6" y="218.8" width="74.9" height="39.4"/><rect x="345.0" y="297.6" width="12.2" height="39.4"/><rect x="357.2" y="218.8" width="87.4" height="39.4"/><rect x="445.0" y="297.6" width="28.5" height="39.4"/><rect x="473.5" y="218.8" width="69.5" height="39.4"/><rect x="544.0" y="218.8" width="100.7" height="39.4"/><rect x="653.8" y="297.6" width="31.9" height="39.4"/><rect x="685.7" y="218.8" width="70.3" height="39.4"/><rect x="756.0" y="297.6" width="29.8" height="39.4"/><rect x="785.8" y="218.8" width="83.4" height="39.4"/><rect x="870.2" y="218.8" width="73.8" height="39.4"/><rect x="971.6" y="218.8" width="26.4" height="39.4"/><rect x="999.0" y="415.8" width="144.3" height="39.4"/><rect x="1143.5" y="297.6" width="19.5" height="39.4"/><rect x="1163.2" y="218.8" width="92.0" height="39.4"/><rect x="1255.5" y="297.6" width="35.7" height="39.4"/><rect x="1291.2" y="218.8" width="51.8" height="39.4"/><rect x="1344.0" y="218.8" width="51.3" height="39.4"/><rect x="1395.3" y="297.6" width="48.7" height="39.4"/><rect x="1444.0" y="218.8" width="99.5" height="39.4"/><rect x="1544.6" y="218.8" width="49.0" height="39.4"/><rect x="1593.6" y="297.6" width="49.4" height="39.4"/><rect x="1644.0" y="297.6" width="11.8" height="39.4"/><rect x="1656.3" y="218.8" width="87.2" height="39.4"/><rect x="1743.5" y="415.8" width="150.3" height="39.4"/></clipPath></defs><g clip-path="url(#noteclip)">
<path d="M223.2 704.8 C223.4 676.6 223.8 570.7 224.4 535.8 C224.7 519.6 225.0 504.8 226.8 495.3 C228.2 488.0 232.8 485.7 235.1 478.6 C237.5 471.4 239.6 463.1 241.0 452.4 C242.6 440.1 243.9 420.2 244.6 404.8 C245.3 389.3 244.5 370.6 245.2 359.7 C245.7 351.5 247.2 346.0 248.8 339.5 C250.4 333.0 252.1 325.8 254.6 320.8 C257.1 315.7 262.0 314.8 264.0 309.2 C266.2 303.2 266.4 294.5 267.6 284.7 C268.8 274.6 270.0 256.3 271.2 248.6 C271.9 244.4 273.5 240.5 274.8 238.5 C275.9 236.9 277.5 236.0 279.2 236.4 C280.9 236.8 282.6 239.4 285.0 240.7 C287.4 242.0 290.0 243.5 293.6 244.0 C297.4 244.5 303.9 243.5 308.0 244.0 C312.1 244.5 315.5 244.8 318.1 247.2 C320.8 249.7 322.7 253.7 323.9 258.7 C325.6 265.4 326.8 276.8 328.2 287.6 C329.6 298.4 331.1 312.2 332.5 323.7 C333.9 335.2 335.4 350.1 336.9 356.8 C337.6 360.1 339.8 364.5 341.2 364.0 C342.6 363.5 344.5 358.2 345.5 354.0 C346.8 348.5 347.9 336.4 349.1 330.9 C350.0 326.7 351.4 320.1 352.7 320.8 C354.0 321.5 355.8 335.9 357.0 335.2 C358.2 334.5 359.2 324.0 360.0 316.4 C361.2 304.1 362.9 274.3 364.3 261.6 C365.3 252.8 366.9 244.4 368.6 240.0 C369.7 237.1 372.5 235.5 374.4 235.0 C376.3 234.5 378.0 236.0 380.2 237.0 C382.4 238.0 384.3 240.0 387.4 240.7 C390.5 241.4 394.9 241.7 399.0 241.4 C403.1 241.1 408.1 238.8 411.9 238.8 C415.7 238.8 419.4 239.5 422.0 241.4 C424.6 243.3 426.5 246.0 427.8 250.0 C429.5 255.3 430.7 266.5 432.1 273.2 C433.5 280.0 435.0 283.5 436.4 290.5 C438.0 298.2 440.1 313.0 441.5 319.3 C442.4 323.0 443.5 328.0 445.1 328.0 C446.7 328.0 449.2 322.7 450.9 319.3 C452.6 315.9 453.5 306.6 455.2 307.8 C456.9 309.0 459.2 322.4 461.0 326.5 C462.2 329.3 465.3 335.3 466.0 332.3 C467.4 326.3 468.4 305.6 469.6 290.5 C470.8 275.4 472.0 250.7 473.2 241.4 C473.6 238.5 475.5 235.9 476.8 234.9 C478.1 233.9 480.0 236.3 481.2 235.6 C482.4 234.9 482.1 230.1 484.0 230.6 C485.9 231.1 488.1 237.4 492.7 238.5 C497.3 239.6 503.9 237.3 511.4 237.0 C519.9 236.6 532.0 236.1 544.0 236.3 C556.0 236.5 575.5 235.6 583.6 238.0 C589.6 239.8 591.1 244.7 592.6 250.7 C594.5 258.2 595.0 270.0 595.1 283.0 C595.6 358.6 595.4 633.8 595.5 704.0" fill="none" stroke="#6dff94" stroke-width="1.4" stroke-linejoin="round" stroke-linecap="round"/>
<path d="M639.1 385.7 C639.3 370.6 639.5 307.8 640.5 295.3 C641.0 289.0 643.9 306.5 645.3 310.4 C646.5 313.7 647.8 316.8 648.8 318.4 C649.5 319.5 650.7 321.1 651.5 320.1 C652.5 318.9 653.8 311.7 655.0 311.3 C656.2 310.9 656.2 316.5 658.6 317.5 C661.0 318.5 666.7 319.0 669.2 317.5 C671.7 316.0 672.8 312.5 673.7 308.6 C675.0 303.0 675.6 292.7 677.2 283.8 C678.8 274.9 681.2 261.7 683.4 255.4 C685.0 250.9 687.8 247.6 690.5 245.7 C693.2 243.8 697.3 244.0 699.4 243.9 C700.8 243.8 701.5 245.0 702.9 244.8 C705.5 244.4 711.8 241.9 715.3 241.3 C718.8 240.7 722.3 240.6 724.2 241.3 C726.1 242.0 725.3 244.8 726.8 245.7 C728.3 246.6 731.5 244.6 733.0 246.6 C734.6 248.8 735.6 253.9 736.6 259.0 C737.8 265.2 738.6 276.7 740.1 283.8 C741.6 290.9 743.3 295.9 745.4 301.5 C747.5 307.1 750.1 314.6 752.5 317.5 C754.3 319.8 757.2 318.5 759.6 319.2 C762.0 319.9 764.3 321.8 766.7 321.9 C769.1 322.0 771.8 322.2 773.8 320.1 C775.9 317.9 777.5 313.4 779.1 308.6 C780.9 303.1 782.6 295.9 784.4 287.3 C786.2 278.7 787.9 264.4 789.7 257.2 C791.1 251.6 791.9 246.1 795.1 243.9 C798.4 241.7 805.1 244.2 809.2 243.9 C813.3 243.6 816.9 242.7 819.9 242.1 C822.8 241.5 825.5 240.2 827.0 240.4 C828.2 240.5 827.5 242.8 828.7 243.0 C831.7 243.4 838.3 243.3 844.7 243.0 C851.5 242.7 860.6 241.9 869.5 241.3 C878.4 240.6 887.0 239.6 897.9 239.1 C908.8 238.7 927.4 238.0 935.1 238.6 C939.1 238.9 942.5 242.3 944.0 243.0" fill="none" stroke="#6dff94" stroke-width="1.4" stroke-linejoin="round" stroke-linecap="round"/>
<path d="M972.3 218.2 C973.0 223.4 975.2 244.5 976.7 249.2 C977.3 251.2 980.2 248.4 981.2 246.6 C982.8 243.5 984.9 233.7 986.5 230.6 C987.4 228.8 990.4 226.0 990.9 228.0 C991.9 232.1 992.1 244.4 992.7 255.4 C993.7 274.1 995.9 319.6 997.1 340.5 C998.0 356.7 999.0 368.3 999.6 381.0 C1000.2 393.7 1000.4 403.6 1000.8 416.7 C1001.2 429.8 1001.3 449.9 1002.0 459.6 C1002.5 465.9 1003.3 475.4 1005.1 475.0 C1006.9 474.6 1010.1 464.3 1012.7 457.2 C1015.4 450.1 1018.0 435.2 1021.0 432.2 C1024.0 429.2 1026.0 438.1 1030.6 439.3 C1035.2 440.5 1043.2 439.6 1048.4 439.3 C1053.6 439.0 1056.7 437.5 1061.5 437.7 C1066.3 437.9 1072.0 440.2 1077.0 440.5 C1082.0 440.8 1086.1 439.8 1091.3 439.3 C1096.5 438.8 1103.6 437.7 1108.0 437.7 C1111.9 437.7 1114.7 436.8 1117.5 439.3 C1120.3 441.7 1122.8 446.7 1124.6 452.4 C1126.8 459.3 1129.6 469.4 1130.6 481.0 C1132.2 498.7 1133.5 545.5 1134.1 558.4" fill="none" stroke="#6dff94" stroke-width="1.4" stroke-linejoin="round" stroke-linecap="round"/>
<path d="M1140.1 685.8 C1140.3 662.8 1140.7 586.6 1141.3 547.7 C1141.9 509.6 1143.0 480.2 1143.7 452.4 C1144.4 424.6 1145.2 398.2 1145.6 381.0 C1145.9 368.4 1145.5 358.2 1146.2 349.4 C1146.9 340.8 1148.7 331.4 1149.7 328.1 C1150.1 326.9 1151.9 328.7 1152.4 329.9 C1153.4 332.1 1154.9 345.5 1155.9 341.4 C1156.9 337.3 1157.7 319.4 1158.6 305.1 C1159.5 290.8 1160.0 266.3 1161.2 255.4 C1161.9 248.8 1163.8 243.0 1165.7 239.5 C1167.4 236.4 1170.4 234.4 1172.8 234.2 C1175.2 234.1 1177.2 238.3 1179.9 238.6 C1182.6 238.9 1185.8 236.9 1188.7 236.0 C1191.7 235.1 1194.6 233.3 1197.6 233.3 C1200.5 233.3 1203.5 234.8 1206.4 236.0 C1209.4 237.2 1211.6 239.7 1215.3 240.4 C1219.0 241.1 1225.5 238.8 1228.6 240.4 C1231.7 242.0 1232.5 245.9 1233.9 250.1 C1235.5 255.0 1236.4 262.2 1238.3 269.6 C1240.2 277.0 1243.0 285.8 1245.4 294.4 C1247.8 303.0 1250.1 316.4 1252.5 321.0 C1253.8 323.5 1256.9 321.4 1259.6 321.9 C1262.3 322.3 1265.5 323.9 1268.5 323.7 C1271.5 323.6 1274.9 322.9 1277.3 321.0 C1279.7 319.1 1281.5 316.2 1282.7 312.2 C1284.3 306.6 1285.6 296.8 1287.1 287.3 C1288.6 277.8 1289.9 263.4 1291.5 255.4 C1292.8 248.8 1294.7 242.4 1296.8 239.5 C1298.5 237.1 1301.5 237.1 1303.9 237.7 C1306.3 238.3 1308.3 241.4 1311.0 243.0 C1313.7 244.6 1317.0 246.6 1319.9 247.5 C1322.9 248.4 1325.6 247.8 1328.7 248.4 C1331.8 249.0 1336.1 252.2 1338.5 251.0 C1340.9 249.8 1341.7 245.4 1342.9 241.3 C1344.5 235.8 1346.6 221.5 1348.2 218.2 C1349.2 216.1 1351.5 219.8 1352.7 221.8 C1354.3 224.5 1355.5 232.0 1358.0 234.2 C1360.5 236.4 1364.8 234.8 1367.7 235.1 C1370.7 235.4 1374.0 233.3 1375.7 236.0 C1377.8 239.4 1378.6 247.6 1380.1 255.4 C1381.7 263.9 1383.7 278.7 1385.5 287.3 C1387.1 295.2 1388.5 301.8 1390.8 306.8 C1393.1 311.8 1395.8 315.1 1399.6 317.5 C1403.4 319.9 1408.5 320.7 1413.8 321.0 C1419.1 321.3 1427.7 321.9 1431.5 319.2 C1435.3 316.6 1435.6 311.0 1436.9 305.1 C1438.7 296.8 1440.4 280.5 1442.2 269.6 C1444.0 258.7 1445.4 244.8 1447.5 239.5 C1448.6 236.8 1451.7 237.7 1454.6 237.7 C1457.5 237.7 1461.1 239.1 1465.2 239.5 C1469.3 239.9 1475.3 240.7 1479.4 240.4 C1483.5 240.1 1486.9 237.2 1490.0 237.7 C1493.1 238.2 1495.4 241.7 1498.0 243.3 C1500.6 244.8 1503.8 244.1 1505.4 247.0 C1507.4 250.7 1509.0 257.9 1509.8 265.4 C1510.9 276.1 1511.8 293.0 1512.0 311.5 C1512.6 384.5 1513.2 638.2 1513.5 703.6" fill="none" stroke="#6dff94" stroke-width="1.4" stroke-linejoin="round" stroke-linecap="round"/>
<path d="M1546.6 703.6 C1547.1 643.2 1548.7 401.4 1549.6 341.0 C1549.6 340.1 1551.8 340.1 1551.8 341.0 C1552.7 401.4 1554.5 643.2 1555.1 703.6" fill="none" stroke="#6dff94" stroke-width="1.4" stroke-linejoin="round" stroke-linecap="round"/>
<path d="M1589.4 703.6 C1589.8 637.3 1590.7 370.8 1592.0 306.0 C1592.1 301.8 1594.8 312.9 1597.5 315.0 C1600.2 317.1 1604.0 317.7 1608.5 318.8 C1613.4 320.0 1621.5 322.5 1627.0 322.5 C1632.5 322.5 1638.3 320.6 1641.6 318.8 C1644.8 317.0 1645.2 310.9 1647.0 311.5 C1648.8 312.1 1651.1 322.5 1652.7 322.5 C1654.3 322.5 1656.0 316.1 1656.4 311.5 C1657.3 300.4 1657.5 269.4 1658.2 256.2 C1658.7 246.6 1659.6 236.5 1660.7 232.3 C1661.1 230.6 1663.5 229.9 1664.8 231.0 C1666.4 232.4 1667.8 238.0 1670.3 240.5 C1672.8 243.0 1676.7 246.0 1679.9 246.0 C1683.1 246.0 1686.8 242.1 1689.5 240.5 C1692.2 238.9 1695.2 237.1 1696.3 236.4" fill="none" stroke="#6dff94" stroke-width="1.4" stroke-linejoin="round" stroke-linecap="round"/>
<path d="M1741.5 705.0 C1741.7 663.4 1742.1 509.0 1742.4 455.4 C1742.6 426.5 1742.8 402.5 1743.6 383.2 C1744.3 365.8 1746.0 349.1 1747.3 339.9 C1748.0 335.0 1750.1 328.8 1751.6 328.3 C1753.0 327.8 1755.0 333.2 1756.0 337.0 C1757.7 343.7 1759.8 356.0 1761.8 368.7 C1764.0 382.7 1766.6 407.7 1769.0 420.7 C1771.0 431.3 1773.3 443.3 1776.2 446.7 C1779.1 450.1 1782.9 443.3 1786.3 440.9 C1789.7 438.5 1791.2 433.3 1796.4 432.3 C1802.7 431.1 1818.3 432.7 1823.8 433.7 C1826.8 434.3 1826.6 437.9 1829.6 438.6 C1833.0 439.4 1839.9 438.9 1844.0 438.6 C1848.1 438.3 1850.7 436.2 1854.1 436.6 C1857.5 437.0 1861.8 439.4 1864.2 440.9 C1866.3 442.2 1866.4 444.1 1868.6 445.3 C1870.8 446.5 1875.0 446.4 1877.2 448.1 C1879.4 449.8 1880.4 452.3 1881.6 455.4 C1882.8 458.5 1882.8 464.7 1884.5 466.9 C1886.2 469.1 1889.5 469.4 1891.7 468.4 C1893.9 467.4 1896.5 462.3 1897.4 461.1" fill="none" stroke="#6dff94" stroke-width="1.4" stroke-linejoin="round" stroke-linecap="round"/>
</g></svg>
<div class="abs" style="left:444.5px;top:105px;width:1.5px;height:601px;background:#9c9cf0"></div>
<svg class="abs" style="left:434px;top:96px" width="22" height="19"><path d="M2 2 H20 L11 17 Z" fill="#3936a6" stroke="#dcdcff" stroke-width="1.6" stroke-linejoin="round"/></svg>
<div class="abs" style="left:1966px;top:382px;width:9px;height:9px;border-radius:50%;background:#3a3c44"></div>
<div class="abs" style="left:1966px;top:398px;width:9px;height:63px;border-radius:5px;background:#3a3c44"></div>
<div class="abs" style="left:1966px;top:465px;width:9px;height:9px;border-radius:50%;background:#3a3c44"></div>
<div class="abs" style="left:0;top:706px;width:1981px;height:5px;background:#303440"></div>
<div class="abs" style="left:0;top:711px;width:1981px;height:55px;background:#262a34"></div>
<div class="t" style="left:719px;top:730px;font-size:15px;color:#a2a5ac">Breath</div>
<div class="abs" style="left:802px;top:726px;width:1px;height:24px;background:#343844"></div>
<svg class="abs" style="left:859px;top:732px" width="11" height="11"><path d="M1 10 L1.8 7 L7.5 1.3 L9.7 3.5 L4 9.2 Z" fill="#a2a5ac"/></svg>
<div class="t" style="left:874px;top:730px;font-size:15px;color:#a2a5ac">Power</div>
<svg class="abs" style="left:949px;top:732px" width="11" height="11"><path d="M1 10 L1.8 7 L7.5 1.3 L9.7 3.5 L4 9.2 Z" fill="#a2a5ac"/></svg>
<div class="t" style="left:963px;top:730px;font-size:15px;color:#a2a5ac">Soft</div>
<svg class="abs" style="left:1023px;top:732px" width="11" height="11"><path d="M1 10 L1.8 7 L7.5 1.3 L9.7 3.5 L4 9.2 Z" fill="#a2a5ac"/></svg>
<div class="t" style="left:1037px;top:730px;font-size:15px;color:#a2a5ac">Breathy</div>
<svg class="abs" style="left:1123px;top:732px" width="11" height="11"><path d="M1 10 L1.8 7 L7.5 1.3 L9.7 3.5 L4 9.2 Z" fill="#a2a5ac"/></svg>
<div class="t" style="left:1137px;top:730px;font-size:15px;color:#a2a5ac">Chest</div>
<svg class="abs" style="left:1209px;top:732px" width="11" height="11"><path d="M1 10 L1.8 7 L7.5 1.3 L9.7 3.5 L4 9.2 Z" fill="#a2a5ac"/></svg>
<div class="t" style="left:1223px;top:730px;font-size:15px;color:#a2a5ac">Rap</div>
<div class="abs" style="left:0;top:0;width:1981px;height:766px;border-radius:16px;border:1px solid rgba(255,255,255,0.07)"></div>
</div>
<svg class="abs" style="left:0;top:0" width="2144" height="1386"><defs><clipPath id="clipbodies">
<rect x="287" y="205" width="525" height="61"/>
<rect x="1169" y="205" width="428" height="61"/>
<rect x="669" y="314" width="524" height="61"/>
<rect x="1526" y="314" width="429" height="61"/>
<rect x="1860" y="423" width="284" height="61"/>
</clipPath></defs><g clip-path="url(#clipbodies)">
<line x1="143.5" y1="161" x2="143.5" y2="490" stroke="rgba(255,255,255,0.1)" stroke-width="1" stroke-dasharray="6 4" stroke-dashoffset="2.6"/>
<line x1="191.5" y1="161" x2="191.5" y2="490" stroke="rgba(255,255,255,0.1)" stroke-width="1" stroke-dasharray="6 4" stroke-dashoffset="2.6"/>
<line x1="239.5" y1="161" x2="239.5" y2="490" stroke="rgba(255,255,255,0.1)" stroke-width="1" stroke-dasharray="6 4" stroke-dashoffset="2.6"/>
<line x1="286.5" y1="161" x2="286.5" y2="490" stroke="rgba(255,255,255,0.1)" stroke-width="1" stroke-dasharray="6 4" stroke-dashoffset="2.6"/>
<line x1="334.5" y1="161" x2="334.5" y2="490" stroke="rgba(255,255,255,0.1)" stroke-width="1" stroke-dasharray="6 4" stroke-dashoffset="2.6"/>
<line x1="382.5" y1="161" x2="382.5" y2="490" stroke="rgba(255,255,255,0.1)" stroke-width="1" stroke-dasharray="6 4" stroke-dashoffset="2.6"/>
<line x1="429.5" y1="161" x2="429.5" y2="490" stroke="rgba(255,255,255,0.1)" stroke-width="1" stroke-dasharray="6 4" stroke-dashoffset="2.6"/>
<line x1="477.5" y1="161" x2="477.5" y2="490" stroke="rgba(255,255,255,0.1)" stroke-width="1" stroke-dasharray="6 4" stroke-dashoffset="2.6"/>
<line x1="525.5" y1="161" x2="525.5" y2="490" stroke="rgba(255,255,255,0.1)" stroke-width="1" stroke-dasharray="6 4" stroke-dashoffset="2.6"/>
<line x1="572.5" y1="161" x2="572.5" y2="490" stroke="rgba(255,255,255,0.1)" stroke-width="1" stroke-dasharray="6 4" stroke-dashoffset="2.6"/>
<line x1="620.5" y1="161" x2="620.5" y2="490" stroke="rgba(255,255,255,0.1)" stroke-width="1" stroke-dasharray="6 4" stroke-dashoffset="2.6"/>
<line x1="668.5" y1="161" x2="668.5" y2="490" stroke="rgba(255,255,255,0.1)" stroke-width="1" stroke-dasharray="6 4" stroke-dashoffset="2.6"/>
<line x1="715.5" y1="161" x2="715.5" y2="490" stroke="rgba(255,255,255,0.1)" stroke-width="1" stroke-dasharray="6 4" stroke-dashoffset="2.6"/>
<line x1="763.5" y1="161" x2="763.5" y2="490" stroke="rgba(255,255,255,0.1)" stroke-width="1" stroke-dasharray="6 4" stroke-dashoffset="2.6"/>
<line x1="811.5" y1="161" x2="811.5" y2="490" stroke="rgba(255,255,255,0.1)" stroke-width="1" stroke-dasharray="6 4" stroke-dashoffset="2.6"/>
<line x1="858.5" y1="161" x2="858.5" y2="490" stroke="rgba(255,255,255,0.1)" stroke-width="1" stroke-dasharray="6 4" stroke-dashoffset="2.6"/>
<line x1="906.5" y1="161" x2="906.5" y2="490" stroke="rgba(255,255,255,0.1)" stroke-width="1" stroke-dasharray="6 4" stroke-dashoffset="2.6"/>
<line x1="954.5" y1="161" x2="954.5" y2="490" stroke="rgba(255,255,255,0.1)" stroke-width="1" stroke-dasharray="6 4" stroke-dashoffset="2.6"/>
<line x1="1001.5" y1="161" x2="1001.5" y2="490" stroke="rgba(255,255,255,0.1)" stroke-width="1" stroke-dasharray="6 4" stroke-dashoffset="2.6"/>
<line x1="1049.5" y1="161" x2="1049.5" y2="490" stroke="rgba(255,255,255,0.1)" stroke-width="1" stroke-dasharray="6 4" stroke-dashoffset="2.6"/>
<line x1="1097.5" y1="161" x2="1097.5" y2="490" stroke="rgba(255,255,255,0.1)" stroke-width="1" stroke-dasharray="6 4" stroke-dashoffset="2.6"/>
<line x1="1144.5" y1="161" x2="1144.5" y2="490" stroke="rgba(255,255,255,0.1)" stroke-width="1" stroke-dasharray="6 4" stroke-dashoffset="2.6"/>
<line x1="1192.5" y1="161" x2="1192.5" y2="490" stroke="rgba(255,255,255,0.1)" stroke-width="1" stroke-dasharray="6 4" stroke-dashoffset="2.6"/>
<line x1="1240.5" y1="161" x2="1240.5" y2="490" stroke="rgba(255,255,255,0.1)" stroke-width="1" stroke-dasharray="6 4" stroke-dashoffset="2.6"/>
<line x1="1287.5" y1="161" x2="1287.5" y2="490" stroke="rgba(255,255,255,0.1)" stroke-width="1" stroke-dasharray="6 4" stroke-dashoffset="2.6"/>
<line x1="1335.5" y1="161" x2="1335.5" y2="490" stroke="rgba(255,255,255,0.1)" stroke-width="1" stroke-dasharray="6 4" stroke-dashoffset="2.6"/>
<line x1="1383.5" y1="161" x2="1383.5" y2="490" stroke="rgba(255,255,255,0.1)" stroke-width="1" stroke-dasharray="6 4" stroke-dashoffset="2.6"/>
<line x1="1430.5" y1="161" x2="1430.5" y2="490" stroke="rgba(255,255,255,0.1)" stroke-width="1" stroke-dasharray="6 4" stroke-dashoffset="2.6"/>
<line x1="1478.5" y1="161" x2="1478.5" y2="490" stroke="rgba(255,255,255,0.1)" stroke-width="1" stroke-dasharray="6 4" stroke-dashoffset="2.6"/>
<line x1="1526.5" y1="161" x2="1526.5" y2="490" stroke="rgba(255,255,255,0.1)" stroke-width="1" stroke-dasharray="6 4" stroke-dashoffset="2.6"/>
<line x1="1573.5" y1="161" x2="1573.5" y2="490" stroke="rgba(255,255,255,0.1)" stroke-width="1" stroke-dasharray="6 4" stroke-dashoffset="2.6"/>
<line x1="1621.5" y1="161" x2="1621.5" y2="490" stroke="rgba(255,255,255,0.1)" stroke-width="1" stroke-dasharray="6 4" stroke-dashoffset="2.6"/>
<line x1="1669.5" y1="161" x2="1669.5" y2="490" stroke="rgba(255,255,255,0.1)" stroke-width="1" stroke-dasharray="6 4" stroke-dashoffset="2.6"/>
<line x1="1716.5" y1="161" x2="1716.5" y2="490" stroke="rgba(255,255,255,0.1)" stroke-width="1" stroke-dasharray="6 4" stroke-dashoffset="2.6"/>
<line x1="1764.5" y1="161" x2="1764.5" y2="490" stroke="rgba(255,255,255,0.1)" stroke-width="1" stroke-dasharray="6 4" stroke-dashoffset="2.6"/>
<line x1="1812.5" y1="161" x2="1812.5" y2="490" stroke="rgba(255,255,255,0.1)" stroke-width="1" stroke-dasharray="6 4" stroke-dashoffset="2.6"/>
<line x1="1859.5" y1="161" x2="1859.5" y2="490" stroke="rgba(255,255,255,0.1)" stroke-width="1" stroke-dasharray="6 4" stroke-dashoffset="2.6"/>
<line x1="1907.5" y1="161" x2="1907.5" y2="490" stroke="rgba(255,255,255,0.1)" stroke-width="1" stroke-dasharray="6 4" stroke-dashoffset="2.6"/>
<line x1="1955.5" y1="161" x2="1955.5" y2="490" stroke="rgba(255,255,255,0.1)" stroke-width="1" stroke-dasharray="6 4" stroke-dashoffset="2.6"/>
<line x1="2002.5" y1="161" x2="2002.5" y2="490" stroke="rgba(255,255,255,0.1)" stroke-width="1" stroke-dasharray="6 4" stroke-dashoffset="2.6"/>
<line x1="2050.5" y1="161" x2="2050.5" y2="490" stroke="rgba(255,255,255,0.1)" stroke-width="1" stroke-dasharray="6 4" stroke-dashoffset="2.6"/>
<line x1="2098.5" y1="161" x2="2098.5" y2="490" stroke="rgba(255,255,255,0.1)" stroke-width="1" stroke-dasharray="6 4" stroke-dashoffset="2.6"/>
</g></svg>
<div class="abs" style="left:1029px;top:1356px;width:85px;height:40px;border-radius:8px 8px 0 0;background:#262a34;border:1px solid #363a46"></div>
<div class="t" style="left:1040px;top:1362px;font-size:18px;color:#f4f4f4">Show</div>
<svg class="abs" style="left:1092px;top:1364px" width="14" height="10"><path d="M2 8 L7 3 L12 8" fill="none" stroke="#f4f4f4" stroke-width="1.8"/></svg>
<div class="abs" style="left:190px;top:1371px;width:9px;height:9px;border-radius:50%;background:#3a3c44"></div>
<div class="abs" style="left:205px;top:1371px;width:128px;height:9px;border-radius:5px;background:#3a3c44"></div>
<div class="abs" style="left:337px;top:1371px;width:9px;height:9px;border-radius:50%;background:#3a3c44"></div>
<div class="abs" style="left:2129px;top:166px;width:10px;height:124px;border-radius:5px;background:rgba(90,92,110,0.45)"></div>
</div></body></html>
